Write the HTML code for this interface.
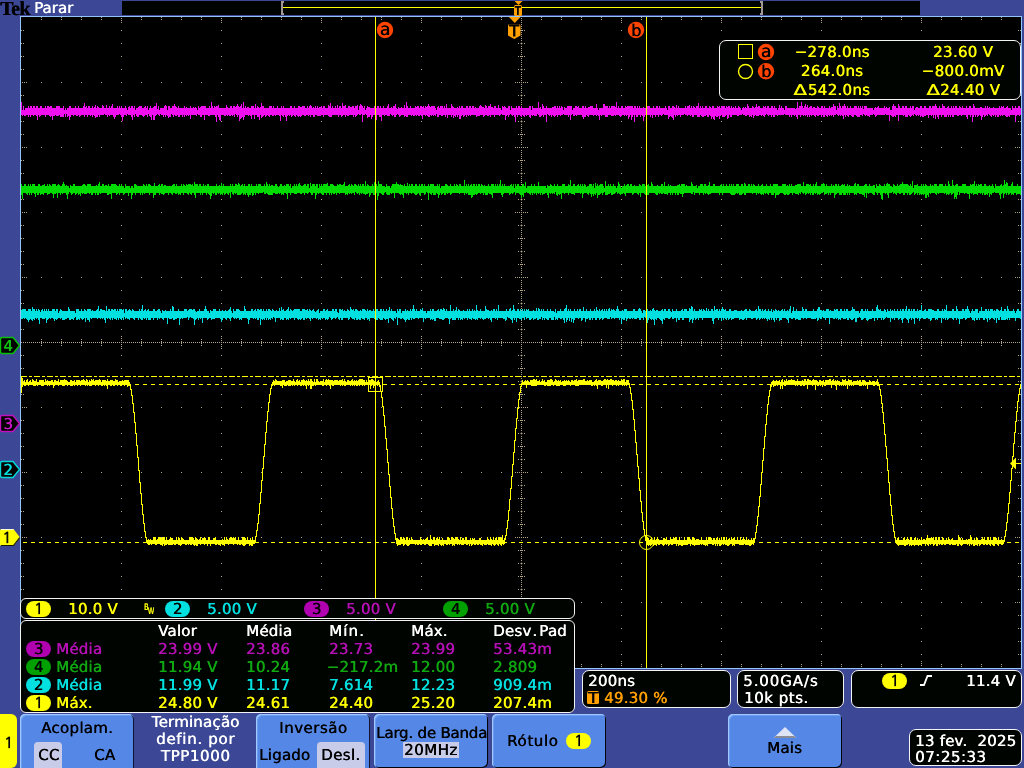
<!DOCTYPE html>
<html lang="pt"><head><meta charset="utf-8"><title>Tek</title>
<style>
html,body{margin:0;padding:0;}
body{text-rendering:geometricPrecision;width:1024px;height:768px;overflow:hidden;background:#3c4896;position:relative;font-family:"DejaVu Sans","Liberation Sans",sans-serif;font-size:15px;line-height:18px;}
#scr{position:absolute;left:0;top:0;}
#ov{position:absolute;left:0;top:0;width:1024px;height:768px;will-change:transform;}
.abs{position:absolute;overflow:visible;}
.t{position:absolute;white-space:nowrap;font-size:15px;line-height:18px;text-shadow:.5px 0 0 currentColor;letter-spacing:.2px;}
.w{color:#fff;} .y{color:#ffff00;} .c{color:#00e0e0;} .m{color:#b410b4;} .g{color:#10a810;} .k{color:#000;}
.ctr{text-align:center;} .cr{text-align:center;letter-spacing:.3px;}
.tek{position:absolute;left:0;top:-2px;font-family:"Liberation Serif","DejaVu Serif",serif;font-weight:bold;font-size:20px;line-height:22px;color:#000;letter-spacing:-.6px;text-shadow:.4px 0 0 #000;}
.ovw{position:absolute;left:122px;top:1px;width:798px;height:14px;background:#000400;}
.box{position:absolute;background:#000400;border:1px solid #f4f4f4;box-sizing:content-box;}
.pill{text-shadow:.6px 0 0 currentColor;position:absolute;width:25px;height:16px;border-radius:8px;color:#000;text-align:center;font-size:15px;line-height:16px;}
.bdg{position:absolute;width:16px;height:16px;text-align:center;line-height:16px;color:#000;text-shadow:.5px 0 0 #000;}
.ba{font-size:17px;}
.bb{font-size:16px;}
.dl{display:inline-block;transform:scaleX(1.3);transform-origin:50% 50%;margin:0 2px 0 1.500px;}
.mk{width:12px;text-align:center;font-size:15px;line-height:18px;}
.tbox{position:absolute;width:12px;height:13px;background:#ffa000;color:#000;font-size:14px;line-height:13px;text-align:center;font-weight:bold;border-radius:1.5px;overflow:hidden;}
.one{font-family:"NanumGothic","DejaVu Sans",sans-serif;font-size:15px;line-height:18px;-webkit-text-stroke:.35px currentColor;}
.ytab{position:absolute;left:0;top:714px;width:17px;height:54px;background:#ffff00;border-radius:0 6px 6px 0;}
.btn{position:absolute;background:#5588e6;border-radius:5px;box-shadow:inset 1px 1px 0 #a0c8ff, inset -1px -1px 0 #04040c, inset 2px 2px 0 #6a9cf0;box-sizing:border-box;}
.flat{border-radius:5px 5px 0 0;box-shadow:inset 1px 1px 0 #a0c8ff, inset -1px 0 0 #101430, inset 2px 2px 0 #6a9cf0;}
.sel{position:absolute;background:#c8cce8;border-radius:4px 4px 0 0;}
</style></head><body>
<svg id="scr" width="1024" height="768" viewBox="0 0 1024 768" shape-rendering="crispEdges">
<rect x="20" y="16" width="1002" height="653" fill="#94c4fa"/>
<rect x="21" y="17" width="1000" height="651" fill="#000"/>
<path fill="#b2a684" d="M41 82h1v1h-1zM61 82h1v1h-1zM81 82h1v1h-1zM101 82h1v1h-1zM121 82h1v1h-1zM141 82h1v1h-1zM161 82h1v1h-1zM181 82h1v1h-1zM201 82h1v1h-1zM221 82h1v1h-1zM241 82h1v1h-1zM261 82h1v1h-1zM281 82h1v1h-1zM301 82h1v1h-1zM321 82h1v1h-1zM341 82h1v1h-1zM361 82h1v1h-1zM381 82h1v1h-1zM401 82h1v1h-1zM421 82h1v1h-1zM441 82h1v1h-1zM461 82h1v1h-1zM481 82h1v1h-1zM501 82h1v1h-1zM541 82h1v1h-1zM561 82h1v1h-1zM581 82h1v1h-1zM601 82h1v1h-1zM621 82h1v1h-1zM641 82h1v1h-1zM661 82h1v1h-1zM681 82h1v1h-1zM701 82h1v1h-1zM721 82h1v1h-1zM741 82h1v1h-1zM761 82h1v1h-1zM781 82h1v1h-1zM801 82h1v1h-1zM821 82h1v1h-1zM841 82h1v1h-1zM861 82h1v1h-1zM881 82h1v1h-1zM901 82h1v1h-1zM921 82h1v1h-1zM941 82h1v1h-1zM961 82h1v1h-1zM981 82h1v1h-1zM1001 82h1v1h-1zM41 147h1v1h-1zM61 147h1v1h-1zM81 147h1v1h-1zM101 147h1v1h-1zM121 147h1v1h-1zM141 147h1v1h-1zM161 147h1v1h-1zM181 147h1v1h-1zM201 147h1v1h-1zM221 147h1v1h-1zM241 147h1v1h-1zM261 147h1v1h-1zM281 147h1v1h-1zM301 147h1v1h-1zM321 147h1v1h-1zM341 147h1v1h-1zM361 147h1v1h-1zM381 147h1v1h-1zM401 147h1v1h-1zM421 147h1v1h-1zM441 147h1v1h-1zM461 147h1v1h-1zM481 147h1v1h-1zM501 147h1v1h-1zM541 147h1v1h-1zM561 147h1v1h-1zM581 147h1v1h-1zM601 147h1v1h-1zM621 147h1v1h-1zM641 147h1v1h-1zM661 147h1v1h-1zM681 147h1v1h-1zM701 147h1v1h-1zM721 147h1v1h-1zM741 147h1v1h-1zM761 147h1v1h-1zM781 147h1v1h-1zM801 147h1v1h-1zM821 147h1v1h-1zM841 147h1v1h-1zM861 147h1v1h-1zM881 147h1v1h-1zM901 147h1v1h-1zM921 147h1v1h-1zM941 147h1v1h-1zM961 147h1v1h-1zM981 147h1v1h-1zM1001 147h1v1h-1zM41 212h1v1h-1zM61 212h1v1h-1zM81 212h1v1h-1zM101 212h1v1h-1zM121 212h1v1h-1zM141 212h1v1h-1zM161 212h1v1h-1zM181 212h1v1h-1zM201 212h1v1h-1zM221 212h1v1h-1zM241 212h1v1h-1zM261 212h1v1h-1zM281 212h1v1h-1zM301 212h1v1h-1zM321 212h1v1h-1zM341 212h1v1h-1zM361 212h1v1h-1zM381 212h1v1h-1zM401 212h1v1h-1zM421 212h1v1h-1zM441 212h1v1h-1zM461 212h1v1h-1zM481 212h1v1h-1zM501 212h1v1h-1zM541 212h1v1h-1zM561 212h1v1h-1zM581 212h1v1h-1zM601 212h1v1h-1zM621 212h1v1h-1zM641 212h1v1h-1zM661 212h1v1h-1zM681 212h1v1h-1zM701 212h1v1h-1zM721 212h1v1h-1zM741 212h1v1h-1zM761 212h1v1h-1zM781 212h1v1h-1zM801 212h1v1h-1zM821 212h1v1h-1zM841 212h1v1h-1zM861 212h1v1h-1zM881 212h1v1h-1zM901 212h1v1h-1zM921 212h1v1h-1zM941 212h1v1h-1zM961 212h1v1h-1zM981 212h1v1h-1zM1001 212h1v1h-1zM41 277h1v1h-1zM61 277h1v1h-1zM81 277h1v1h-1zM101 277h1v1h-1zM121 277h1v1h-1zM141 277h1v1h-1zM161 277h1v1h-1zM181 277h1v1h-1zM201 277h1v1h-1zM221 277h1v1h-1zM241 277h1v1h-1zM261 277h1v1h-1zM281 277h1v1h-1zM301 277h1v1h-1zM321 277h1v1h-1zM341 277h1v1h-1zM361 277h1v1h-1zM381 277h1v1h-1zM401 277h1v1h-1zM421 277h1v1h-1zM441 277h1v1h-1zM461 277h1v1h-1zM481 277h1v1h-1zM501 277h1v1h-1zM541 277h1v1h-1zM561 277h1v1h-1zM581 277h1v1h-1zM601 277h1v1h-1zM621 277h1v1h-1zM641 277h1v1h-1zM661 277h1v1h-1zM681 277h1v1h-1zM701 277h1v1h-1zM721 277h1v1h-1zM741 277h1v1h-1zM761 277h1v1h-1zM781 277h1v1h-1zM801 277h1v1h-1zM821 277h1v1h-1zM841 277h1v1h-1zM861 277h1v1h-1zM881 277h1v1h-1zM901 277h1v1h-1zM921 277h1v1h-1zM941 277h1v1h-1zM961 277h1v1h-1zM981 277h1v1h-1zM1001 277h1v1h-1zM41 407h1v1h-1zM61 407h1v1h-1zM81 407h1v1h-1zM101 407h1v1h-1zM121 407h1v1h-1zM141 407h1v1h-1zM161 407h1v1h-1zM181 407h1v1h-1zM201 407h1v1h-1zM221 407h1v1h-1zM241 407h1v1h-1zM261 407h1v1h-1zM281 407h1v1h-1zM301 407h1v1h-1zM321 407h1v1h-1zM341 407h1v1h-1zM361 407h1v1h-1zM381 407h1v1h-1zM401 407h1v1h-1zM421 407h1v1h-1zM441 407h1v1h-1zM461 407h1v1h-1zM481 407h1v1h-1zM501 407h1v1h-1zM541 407h1v1h-1zM561 407h1v1h-1zM581 407h1v1h-1zM601 407h1v1h-1zM621 407h1v1h-1zM641 407h1v1h-1zM661 407h1v1h-1zM681 407h1v1h-1zM701 407h1v1h-1zM721 407h1v1h-1zM741 407h1v1h-1zM761 407h1v1h-1zM781 407h1v1h-1zM801 407h1v1h-1zM821 407h1v1h-1zM841 407h1v1h-1zM861 407h1v1h-1zM881 407h1v1h-1zM901 407h1v1h-1zM921 407h1v1h-1zM941 407h1v1h-1zM961 407h1v1h-1zM981 407h1v1h-1zM1001 407h1v1h-1zM41 472h1v1h-1zM61 472h1v1h-1zM81 472h1v1h-1zM101 472h1v1h-1zM121 472h1v1h-1zM141 472h1v1h-1zM161 472h1v1h-1zM181 472h1v1h-1zM201 472h1v1h-1zM221 472h1v1h-1zM241 472h1v1h-1zM261 472h1v1h-1zM281 472h1v1h-1zM301 472h1v1h-1zM321 472h1v1h-1zM341 472h1v1h-1zM361 472h1v1h-1zM381 472h1v1h-1zM401 472h1v1h-1zM421 472h1v1h-1zM441 472h1v1h-1zM461 472h1v1h-1zM481 472h1v1h-1zM501 472h1v1h-1zM541 472h1v1h-1zM561 472h1v1h-1zM581 472h1v1h-1zM601 472h1v1h-1zM621 472h1v1h-1zM641 472h1v1h-1zM661 472h1v1h-1zM681 472h1v1h-1zM701 472h1v1h-1zM721 472h1v1h-1zM741 472h1v1h-1zM761 472h1v1h-1zM781 472h1v1h-1zM801 472h1v1h-1zM821 472h1v1h-1zM841 472h1v1h-1zM861 472h1v1h-1zM881 472h1v1h-1zM901 472h1v1h-1zM921 472h1v1h-1zM941 472h1v1h-1zM961 472h1v1h-1zM981 472h1v1h-1zM1001 472h1v1h-1zM41 537h1v1h-1zM61 537h1v1h-1zM81 537h1v1h-1zM101 537h1v1h-1zM121 537h1v1h-1zM141 537h1v1h-1zM161 537h1v1h-1zM181 537h1v1h-1zM201 537h1v1h-1zM221 537h1v1h-1zM241 537h1v1h-1zM261 537h1v1h-1zM281 537h1v1h-1zM301 537h1v1h-1zM321 537h1v1h-1zM341 537h1v1h-1zM361 537h1v1h-1zM381 537h1v1h-1zM401 537h1v1h-1zM421 537h1v1h-1zM441 537h1v1h-1zM461 537h1v1h-1zM481 537h1v1h-1zM501 537h1v1h-1zM541 537h1v1h-1zM561 537h1v1h-1zM581 537h1v1h-1zM601 537h1v1h-1zM621 537h1v1h-1zM641 537h1v1h-1zM661 537h1v1h-1zM681 537h1v1h-1zM701 537h1v1h-1zM721 537h1v1h-1zM741 537h1v1h-1zM761 537h1v1h-1zM781 537h1v1h-1zM801 537h1v1h-1zM821 537h1v1h-1zM841 537h1v1h-1zM861 537h1v1h-1zM881 537h1v1h-1zM901 537h1v1h-1zM921 537h1v1h-1zM941 537h1v1h-1zM961 537h1v1h-1zM981 537h1v1h-1zM1001 537h1v1h-1zM41 602h1v1h-1zM61 602h1v1h-1zM81 602h1v1h-1zM101 602h1v1h-1zM121 602h1v1h-1zM141 602h1v1h-1zM161 602h1v1h-1zM181 602h1v1h-1zM201 602h1v1h-1zM221 602h1v1h-1zM241 602h1v1h-1zM261 602h1v1h-1zM281 602h1v1h-1zM301 602h1v1h-1zM321 602h1v1h-1zM341 602h1v1h-1zM361 602h1v1h-1zM381 602h1v1h-1zM401 602h1v1h-1zM421 602h1v1h-1zM441 602h1v1h-1zM461 602h1v1h-1zM481 602h1v1h-1zM501 602h1v1h-1zM541 602h1v1h-1zM561 602h1v1h-1zM581 602h1v1h-1zM601 602h1v1h-1zM621 602h1v1h-1zM641 602h1v1h-1zM661 602h1v1h-1zM681 602h1v1h-1zM701 602h1v1h-1zM721 602h1v1h-1zM741 602h1v1h-1zM761 602h1v1h-1zM781 602h1v1h-1zM801 602h1v1h-1zM821 602h1v1h-1zM841 602h1v1h-1zM861 602h1v1h-1zM881 602h1v1h-1zM901 602h1v1h-1zM921 602h1v1h-1zM941 602h1v1h-1zM961 602h1v1h-1zM981 602h1v1h-1zM1001 602h1v1h-1zM121 30h1v1h-1zM121 43h1v1h-1zM121 56h1v1h-1zM121 69h1v1h-1zM121 82h1v1h-1zM121 95h1v1h-1zM121 108h1v1h-1zM121 121h1v1h-1zM121 134h1v1h-1zM121 147h1v1h-1zM121 160h1v1h-1zM121 173h1v1h-1zM121 186h1v1h-1zM121 199h1v1h-1zM121 212h1v1h-1zM121 225h1v1h-1zM121 238h1v1h-1zM121 251h1v1h-1zM121 264h1v1h-1zM121 277h1v1h-1zM121 290h1v1h-1zM121 303h1v1h-1zM121 316h1v1h-1zM121 329h1v1h-1zM121 355h1v1h-1zM121 368h1v1h-1zM121 381h1v1h-1zM121 394h1v1h-1zM121 407h1v1h-1zM121 420h1v1h-1zM121 433h1v1h-1zM121 446h1v1h-1zM121 459h1v1h-1zM121 472h1v1h-1zM121 485h1v1h-1zM121 498h1v1h-1zM121 511h1v1h-1zM121 524h1v1h-1zM121 537h1v1h-1zM121 550h1v1h-1zM121 563h1v1h-1zM121 576h1v1h-1zM121 589h1v1h-1zM121 602h1v1h-1zM121 615h1v1h-1zM121 628h1v1h-1zM121 641h1v1h-1zM121 654h1v1h-1zM221 30h1v1h-1zM221 43h1v1h-1zM221 56h1v1h-1zM221 69h1v1h-1zM221 82h1v1h-1zM221 95h1v1h-1zM221 108h1v1h-1zM221 121h1v1h-1zM221 134h1v1h-1zM221 147h1v1h-1zM221 160h1v1h-1zM221 173h1v1h-1zM221 186h1v1h-1zM221 199h1v1h-1zM221 212h1v1h-1zM221 225h1v1h-1zM221 238h1v1h-1zM221 251h1v1h-1zM221 264h1v1h-1zM221 277h1v1h-1zM221 290h1v1h-1zM221 303h1v1h-1zM221 316h1v1h-1zM221 329h1v1h-1zM221 355h1v1h-1zM221 368h1v1h-1zM221 381h1v1h-1zM221 394h1v1h-1zM221 407h1v1h-1zM221 420h1v1h-1zM221 433h1v1h-1zM221 446h1v1h-1zM221 459h1v1h-1zM221 472h1v1h-1zM221 485h1v1h-1zM221 498h1v1h-1zM221 511h1v1h-1zM221 524h1v1h-1zM221 537h1v1h-1zM221 550h1v1h-1zM221 563h1v1h-1zM221 576h1v1h-1zM221 589h1v1h-1zM221 602h1v1h-1zM221 615h1v1h-1zM221 628h1v1h-1zM221 641h1v1h-1zM221 654h1v1h-1zM321 30h1v1h-1zM321 43h1v1h-1zM321 56h1v1h-1zM321 69h1v1h-1zM321 82h1v1h-1zM321 95h1v1h-1zM321 108h1v1h-1zM321 121h1v1h-1zM321 134h1v1h-1zM321 147h1v1h-1zM321 160h1v1h-1zM321 173h1v1h-1zM321 186h1v1h-1zM321 199h1v1h-1zM321 212h1v1h-1zM321 225h1v1h-1zM321 238h1v1h-1zM321 251h1v1h-1zM321 264h1v1h-1zM321 277h1v1h-1zM321 290h1v1h-1zM321 303h1v1h-1zM321 316h1v1h-1zM321 329h1v1h-1zM321 355h1v1h-1zM321 368h1v1h-1zM321 381h1v1h-1zM321 394h1v1h-1zM321 407h1v1h-1zM321 420h1v1h-1zM321 433h1v1h-1zM321 446h1v1h-1zM321 459h1v1h-1zM321 472h1v1h-1zM321 485h1v1h-1zM321 498h1v1h-1zM321 511h1v1h-1zM321 524h1v1h-1zM321 537h1v1h-1zM321 550h1v1h-1zM321 563h1v1h-1zM321 576h1v1h-1zM321 589h1v1h-1zM321 602h1v1h-1zM321 615h1v1h-1zM321 628h1v1h-1zM321 641h1v1h-1zM321 654h1v1h-1zM421 30h1v1h-1zM421 43h1v1h-1zM421 56h1v1h-1zM421 69h1v1h-1zM421 82h1v1h-1zM421 95h1v1h-1zM421 108h1v1h-1zM421 121h1v1h-1zM421 134h1v1h-1zM421 147h1v1h-1zM421 160h1v1h-1zM421 173h1v1h-1zM421 186h1v1h-1zM421 199h1v1h-1zM421 212h1v1h-1zM421 225h1v1h-1zM421 238h1v1h-1zM421 251h1v1h-1zM421 264h1v1h-1zM421 277h1v1h-1zM421 290h1v1h-1zM421 303h1v1h-1zM421 316h1v1h-1zM421 329h1v1h-1zM421 355h1v1h-1zM421 368h1v1h-1zM421 381h1v1h-1zM421 394h1v1h-1zM421 407h1v1h-1zM421 420h1v1h-1zM421 433h1v1h-1zM421 446h1v1h-1zM421 459h1v1h-1zM421 472h1v1h-1zM421 485h1v1h-1zM421 498h1v1h-1zM421 511h1v1h-1zM421 524h1v1h-1zM421 537h1v1h-1zM421 550h1v1h-1zM421 563h1v1h-1zM421 576h1v1h-1zM421 589h1v1h-1zM421 602h1v1h-1zM421 615h1v1h-1zM421 628h1v1h-1zM421 641h1v1h-1zM421 654h1v1h-1zM621 30h1v1h-1zM621 43h1v1h-1zM621 56h1v1h-1zM621 69h1v1h-1zM621 82h1v1h-1zM621 95h1v1h-1zM621 108h1v1h-1zM621 121h1v1h-1zM621 134h1v1h-1zM621 147h1v1h-1zM621 160h1v1h-1zM621 173h1v1h-1zM621 186h1v1h-1zM621 199h1v1h-1zM621 212h1v1h-1zM621 225h1v1h-1zM621 238h1v1h-1zM621 251h1v1h-1zM621 264h1v1h-1zM621 277h1v1h-1zM621 290h1v1h-1zM621 303h1v1h-1zM621 316h1v1h-1zM621 329h1v1h-1zM621 355h1v1h-1zM621 368h1v1h-1zM621 381h1v1h-1zM621 394h1v1h-1zM621 407h1v1h-1zM621 420h1v1h-1zM621 433h1v1h-1zM621 446h1v1h-1zM621 459h1v1h-1zM621 472h1v1h-1zM621 485h1v1h-1zM621 498h1v1h-1zM621 511h1v1h-1zM621 524h1v1h-1zM621 537h1v1h-1zM621 550h1v1h-1zM621 563h1v1h-1zM621 576h1v1h-1zM621 589h1v1h-1zM621 602h1v1h-1zM621 615h1v1h-1zM621 628h1v1h-1zM621 641h1v1h-1zM621 654h1v1h-1zM721 30h1v1h-1zM721 43h1v1h-1zM721 56h1v1h-1zM721 69h1v1h-1zM721 82h1v1h-1zM721 95h1v1h-1zM721 108h1v1h-1zM721 121h1v1h-1zM721 134h1v1h-1zM721 147h1v1h-1zM721 160h1v1h-1zM721 173h1v1h-1zM721 186h1v1h-1zM721 199h1v1h-1zM721 212h1v1h-1zM721 225h1v1h-1zM721 238h1v1h-1zM721 251h1v1h-1zM721 264h1v1h-1zM721 277h1v1h-1zM721 290h1v1h-1zM721 303h1v1h-1zM721 316h1v1h-1zM721 329h1v1h-1zM721 355h1v1h-1zM721 368h1v1h-1zM721 381h1v1h-1zM721 394h1v1h-1zM721 407h1v1h-1zM721 420h1v1h-1zM721 433h1v1h-1zM721 446h1v1h-1zM721 459h1v1h-1zM721 472h1v1h-1zM721 485h1v1h-1zM721 498h1v1h-1zM721 511h1v1h-1zM721 524h1v1h-1zM721 537h1v1h-1zM721 550h1v1h-1zM721 563h1v1h-1zM721 576h1v1h-1zM721 589h1v1h-1zM721 602h1v1h-1zM721 615h1v1h-1zM721 628h1v1h-1zM721 641h1v1h-1zM721 654h1v1h-1zM821 30h1v1h-1zM821 43h1v1h-1zM821 56h1v1h-1zM821 69h1v1h-1zM821 82h1v1h-1zM821 95h1v1h-1zM821 108h1v1h-1zM821 121h1v1h-1zM821 134h1v1h-1zM821 147h1v1h-1zM821 160h1v1h-1zM821 173h1v1h-1zM821 186h1v1h-1zM821 199h1v1h-1zM821 212h1v1h-1zM821 225h1v1h-1zM821 238h1v1h-1zM821 251h1v1h-1zM821 264h1v1h-1zM821 277h1v1h-1zM821 290h1v1h-1zM821 303h1v1h-1zM821 316h1v1h-1zM821 329h1v1h-1zM821 355h1v1h-1zM821 368h1v1h-1zM821 381h1v1h-1zM821 394h1v1h-1zM821 407h1v1h-1zM821 420h1v1h-1zM821 433h1v1h-1zM821 446h1v1h-1zM821 459h1v1h-1zM821 472h1v1h-1zM821 485h1v1h-1zM821 498h1v1h-1zM821 511h1v1h-1zM821 524h1v1h-1zM821 537h1v1h-1zM821 550h1v1h-1zM821 563h1v1h-1zM821 576h1v1h-1zM821 589h1v1h-1zM821 602h1v1h-1zM821 615h1v1h-1zM821 628h1v1h-1zM821 641h1v1h-1zM821 654h1v1h-1zM921 30h1v1h-1zM921 43h1v1h-1zM921 56h1v1h-1zM921 69h1v1h-1zM921 82h1v1h-1zM921 95h1v1h-1zM921 108h1v1h-1zM921 121h1v1h-1zM921 134h1v1h-1zM921 147h1v1h-1zM921 160h1v1h-1zM921 173h1v1h-1zM921 186h1v1h-1zM921 199h1v1h-1zM921 212h1v1h-1zM921 225h1v1h-1zM921 238h1v1h-1zM921 251h1v1h-1zM921 264h1v1h-1zM921 277h1v1h-1zM921 290h1v1h-1zM921 303h1v1h-1zM921 316h1v1h-1zM921 329h1v1h-1zM921 355h1v1h-1zM921 368h1v1h-1zM921 381h1v1h-1zM921 394h1v1h-1zM921 407h1v1h-1zM921 420h1v1h-1zM921 433h1v1h-1zM921 446h1v1h-1zM921 459h1v1h-1zM921 472h1v1h-1zM921 485h1v1h-1zM921 498h1v1h-1zM921 511h1v1h-1zM921 524h1v1h-1zM921 537h1v1h-1zM921 550h1v1h-1zM921 563h1v1h-1zM921 576h1v1h-1zM921 589h1v1h-1zM921 602h1v1h-1zM921 615h1v1h-1zM921 628h1v1h-1zM921 641h1v1h-1zM921 654h1v1h-1zM21 30h1v1h-1zM1020 30h1v1h-1zM23 30h1v1h-1zM1018 30h1v1h-1zM21 43h1v1h-1zM1020 43h1v1h-1zM23 43h1v1h-1zM1018 43h1v1h-1zM21 56h1v1h-1zM1020 56h1v1h-1zM23 56h1v1h-1zM1018 56h1v1h-1zM21 69h1v1h-1zM1020 69h1v1h-1zM23 69h1v1h-1zM1018 69h1v1h-1zM22 82h1v1h-1zM1019 82h1v1h-1zM24 82h1v1h-1zM1017 82h1v1h-1zM26 82h1v1h-1zM1015 82h1v1h-1zM21 95h1v1h-1zM1020 95h1v1h-1zM23 95h1v1h-1zM1018 95h1v1h-1zM21 108h1v1h-1zM1020 108h1v1h-1zM23 108h1v1h-1zM1018 108h1v1h-1zM21 121h1v1h-1zM1020 121h1v1h-1zM23 121h1v1h-1zM1018 121h1v1h-1zM21 134h1v1h-1zM1020 134h1v1h-1zM23 134h1v1h-1zM1018 134h1v1h-1zM22 147h1v1h-1zM1019 147h1v1h-1zM24 147h1v1h-1zM1017 147h1v1h-1zM26 147h1v1h-1zM1015 147h1v1h-1zM21 160h1v1h-1zM1020 160h1v1h-1zM23 160h1v1h-1zM1018 160h1v1h-1zM21 173h1v1h-1zM1020 173h1v1h-1zM23 173h1v1h-1zM1018 173h1v1h-1zM21 186h1v1h-1zM1020 186h1v1h-1zM23 186h1v1h-1zM1018 186h1v1h-1zM21 199h1v1h-1zM1020 199h1v1h-1zM23 199h1v1h-1zM1018 199h1v1h-1zM22 212h1v1h-1zM1019 212h1v1h-1zM24 212h1v1h-1zM1017 212h1v1h-1zM26 212h1v1h-1zM1015 212h1v1h-1zM21 225h1v1h-1zM1020 225h1v1h-1zM23 225h1v1h-1zM1018 225h1v1h-1zM21 238h1v1h-1zM1020 238h1v1h-1zM23 238h1v1h-1zM1018 238h1v1h-1zM21 251h1v1h-1zM1020 251h1v1h-1zM23 251h1v1h-1zM1018 251h1v1h-1zM21 264h1v1h-1zM1020 264h1v1h-1zM23 264h1v1h-1zM1018 264h1v1h-1zM22 277h1v1h-1zM1019 277h1v1h-1zM24 277h1v1h-1zM1017 277h1v1h-1zM26 277h1v1h-1zM1015 277h1v1h-1zM21 290h1v1h-1zM1020 290h1v1h-1zM23 290h1v1h-1zM1018 290h1v1h-1zM21 303h1v1h-1zM1020 303h1v1h-1zM23 303h1v1h-1zM1018 303h1v1h-1zM21 316h1v1h-1zM1020 316h1v1h-1zM23 316h1v1h-1zM1018 316h1v1h-1zM21 329h1v1h-1zM1020 329h1v1h-1zM23 329h1v1h-1zM1018 329h1v1h-1zM21 355h1v1h-1zM1020 355h1v1h-1zM23 355h1v1h-1zM1018 355h1v1h-1zM21 368h1v1h-1zM1020 368h1v1h-1zM23 368h1v1h-1zM1018 368h1v1h-1zM21 381h1v1h-1zM1020 381h1v1h-1zM23 381h1v1h-1zM1018 381h1v1h-1zM21 394h1v1h-1zM1020 394h1v1h-1zM23 394h1v1h-1zM1018 394h1v1h-1zM22 407h1v1h-1zM1019 407h1v1h-1zM24 407h1v1h-1zM1017 407h1v1h-1zM26 407h1v1h-1zM1015 407h1v1h-1zM21 420h1v1h-1zM1020 420h1v1h-1zM23 420h1v1h-1zM1018 420h1v1h-1zM21 433h1v1h-1zM1020 433h1v1h-1zM23 433h1v1h-1zM1018 433h1v1h-1zM21 446h1v1h-1zM1020 446h1v1h-1zM23 446h1v1h-1zM1018 446h1v1h-1zM21 459h1v1h-1zM1020 459h1v1h-1zM23 459h1v1h-1zM1018 459h1v1h-1zM22 472h1v1h-1zM1019 472h1v1h-1zM24 472h1v1h-1zM1017 472h1v1h-1zM26 472h1v1h-1zM1015 472h1v1h-1zM21 485h1v1h-1zM1020 485h1v1h-1zM23 485h1v1h-1zM1018 485h1v1h-1zM21 498h1v1h-1zM1020 498h1v1h-1zM23 498h1v1h-1zM1018 498h1v1h-1zM21 511h1v1h-1zM1020 511h1v1h-1zM23 511h1v1h-1zM1018 511h1v1h-1zM21 524h1v1h-1zM1020 524h1v1h-1zM23 524h1v1h-1zM1018 524h1v1h-1zM22 537h1v1h-1zM1019 537h1v1h-1zM24 537h1v1h-1zM1017 537h1v1h-1zM26 537h1v1h-1zM1015 537h1v1h-1zM21 550h1v1h-1zM1020 550h1v1h-1zM23 550h1v1h-1zM1018 550h1v1h-1zM21 563h1v1h-1zM1020 563h1v1h-1zM23 563h1v1h-1zM1018 563h1v1h-1zM21 576h1v1h-1zM1020 576h1v1h-1zM23 576h1v1h-1zM1018 576h1v1h-1zM21 589h1v1h-1zM1020 589h1v1h-1zM23 589h1v1h-1zM1018 589h1v1h-1zM22 602h1v1h-1zM1019 602h1v1h-1zM24 602h1v1h-1zM1017 602h1v1h-1zM26 602h1v1h-1zM1015 602h1v1h-1zM21 615h1v1h-1zM1020 615h1v1h-1zM23 615h1v1h-1zM1018 615h1v1h-1zM21 628h1v1h-1zM1020 628h1v1h-1zM23 628h1v1h-1zM1018 628h1v1h-1zM21 641h1v1h-1zM1020 641h1v1h-1zM23 641h1v1h-1zM1018 641h1v1h-1zM21 654h1v1h-1zM1020 654h1v1h-1zM23 654h1v1h-1zM1018 654h1v1h-1zM41 17h1v1h-1zM41 666h1v1h-1zM41 19h1v1h-1zM41 664h1v1h-1zM61 17h1v1h-1zM61 666h1v1h-1zM61 19h1v1h-1zM61 664h1v1h-1zM81 17h1v1h-1zM81 666h1v1h-1zM81 19h1v1h-1zM81 664h1v1h-1zM101 17h1v1h-1zM101 666h1v1h-1zM101 19h1v1h-1zM101 664h1v1h-1zM121 18h1v1h-1zM121 665h1v1h-1zM121 20h1v1h-1zM121 663h1v1h-1zM121 22h1v1h-1zM121 661h1v1h-1zM141 17h1v1h-1zM141 666h1v1h-1zM141 19h1v1h-1zM141 664h1v1h-1zM161 17h1v1h-1zM161 666h1v1h-1zM161 19h1v1h-1zM161 664h1v1h-1zM181 17h1v1h-1zM181 666h1v1h-1zM181 19h1v1h-1zM181 664h1v1h-1zM201 17h1v1h-1zM201 666h1v1h-1zM201 19h1v1h-1zM201 664h1v1h-1zM221 18h1v1h-1zM221 665h1v1h-1zM221 20h1v1h-1zM221 663h1v1h-1zM221 22h1v1h-1zM221 661h1v1h-1zM241 17h1v1h-1zM241 666h1v1h-1zM241 19h1v1h-1zM241 664h1v1h-1zM261 17h1v1h-1zM261 666h1v1h-1zM261 19h1v1h-1zM261 664h1v1h-1zM281 17h1v1h-1zM281 666h1v1h-1zM281 19h1v1h-1zM281 664h1v1h-1zM301 17h1v1h-1zM301 666h1v1h-1zM301 19h1v1h-1zM301 664h1v1h-1zM321 18h1v1h-1zM321 665h1v1h-1zM321 20h1v1h-1zM321 663h1v1h-1zM321 22h1v1h-1zM321 661h1v1h-1zM341 17h1v1h-1zM341 666h1v1h-1zM341 19h1v1h-1zM341 664h1v1h-1zM361 17h1v1h-1zM361 666h1v1h-1zM361 19h1v1h-1zM361 664h1v1h-1zM381 17h1v1h-1zM381 666h1v1h-1zM381 19h1v1h-1zM381 664h1v1h-1zM401 17h1v1h-1zM401 666h1v1h-1zM401 19h1v1h-1zM401 664h1v1h-1zM421 18h1v1h-1zM421 665h1v1h-1zM421 20h1v1h-1zM421 663h1v1h-1zM421 22h1v1h-1zM421 661h1v1h-1zM441 17h1v1h-1zM441 666h1v1h-1zM441 19h1v1h-1zM441 664h1v1h-1zM461 17h1v1h-1zM461 666h1v1h-1zM461 19h1v1h-1zM461 664h1v1h-1zM481 17h1v1h-1zM481 666h1v1h-1zM481 19h1v1h-1zM481 664h1v1h-1zM501 17h1v1h-1zM501 666h1v1h-1zM501 19h1v1h-1zM501 664h1v1h-1zM541 17h1v1h-1zM541 666h1v1h-1zM541 19h1v1h-1zM541 664h1v1h-1zM561 17h1v1h-1zM561 666h1v1h-1zM561 19h1v1h-1zM561 664h1v1h-1zM581 17h1v1h-1zM581 666h1v1h-1zM581 19h1v1h-1zM581 664h1v1h-1zM601 17h1v1h-1zM601 666h1v1h-1zM601 19h1v1h-1zM601 664h1v1h-1zM621 18h1v1h-1zM621 665h1v1h-1zM621 20h1v1h-1zM621 663h1v1h-1zM621 22h1v1h-1zM621 661h1v1h-1zM641 17h1v1h-1zM641 666h1v1h-1zM641 19h1v1h-1zM641 664h1v1h-1zM661 17h1v1h-1zM661 666h1v1h-1zM661 19h1v1h-1zM661 664h1v1h-1zM681 17h1v1h-1zM681 666h1v1h-1zM681 19h1v1h-1zM681 664h1v1h-1zM701 17h1v1h-1zM701 666h1v1h-1zM701 19h1v1h-1zM701 664h1v1h-1zM721 18h1v1h-1zM721 665h1v1h-1zM721 20h1v1h-1zM721 663h1v1h-1zM721 22h1v1h-1zM721 661h1v1h-1zM741 17h1v1h-1zM741 666h1v1h-1zM741 19h1v1h-1zM741 664h1v1h-1zM761 17h1v1h-1zM761 666h1v1h-1zM761 19h1v1h-1zM761 664h1v1h-1zM781 17h1v1h-1zM781 666h1v1h-1zM781 19h1v1h-1zM781 664h1v1h-1zM801 17h1v1h-1zM801 666h1v1h-1zM801 19h1v1h-1zM801 664h1v1h-1zM821 18h1v1h-1zM821 665h1v1h-1zM821 20h1v1h-1zM821 663h1v1h-1zM821 22h1v1h-1zM821 661h1v1h-1zM841 17h1v1h-1zM841 666h1v1h-1zM841 19h1v1h-1zM841 664h1v1h-1zM861 17h1v1h-1zM861 666h1v1h-1zM861 19h1v1h-1zM861 664h1v1h-1zM881 17h1v1h-1zM881 666h1v1h-1zM881 19h1v1h-1zM881 664h1v1h-1zM901 17h1v1h-1zM901 666h1v1h-1zM901 19h1v1h-1zM901 664h1v1h-1zM921 18h1v1h-1zM921 665h1v1h-1zM921 20h1v1h-1zM921 663h1v1h-1zM921 22h1v1h-1zM921 661h1v1h-1zM941 17h1v1h-1zM941 666h1v1h-1zM941 19h1v1h-1zM941 664h1v1h-1zM961 17h1v1h-1zM961 666h1v1h-1zM961 19h1v1h-1zM961 664h1v1h-1zM981 17h1v1h-1zM981 666h1v1h-1zM981 19h1v1h-1zM981 664h1v1h-1zM1001 17h1v1h-1zM1001 666h1v1h-1zM1001 19h1v1h-1zM1001 664h1v1h-1zM21 342h1v1h-1zM23 342h1v1h-1zM25 342h1v1h-1zM27 342h1v1h-1zM29 342h1v1h-1zM31 342h1v1h-1zM33 342h1v1h-1zM35 342h1v1h-1zM37 342h1v1h-1zM39 342h1v1h-1zM41 342h1v1h-1zM43 342h1v1h-1zM45 342h1v1h-1zM47 342h1v1h-1zM49 342h1v1h-1zM51 342h1v1h-1zM53 342h1v1h-1zM55 342h1v1h-1zM57 342h1v1h-1zM59 342h1v1h-1zM61 342h1v1h-1zM63 342h1v1h-1zM65 342h1v1h-1zM67 342h1v1h-1zM69 342h1v1h-1zM71 342h1v1h-1zM73 342h1v1h-1zM75 342h1v1h-1zM77 342h1v1h-1zM79 342h1v1h-1zM81 342h1v1h-1zM83 342h1v1h-1zM85 342h1v1h-1zM87 342h1v1h-1zM89 342h1v1h-1zM91 342h1v1h-1zM93 342h1v1h-1zM95 342h1v1h-1zM97 342h1v1h-1zM99 342h1v1h-1zM101 342h1v1h-1zM103 342h1v1h-1zM105 342h1v1h-1zM107 342h1v1h-1zM109 342h1v1h-1zM111 342h1v1h-1zM113 342h1v1h-1zM115 342h1v1h-1zM117 342h1v1h-1zM119 342h1v1h-1zM121 342h1v1h-1zM123 342h1v1h-1zM125 342h1v1h-1zM127 342h1v1h-1zM129 342h1v1h-1zM131 342h1v1h-1zM133 342h1v1h-1zM135 342h1v1h-1zM137 342h1v1h-1zM139 342h1v1h-1zM141 342h1v1h-1zM143 342h1v1h-1zM145 342h1v1h-1zM147 342h1v1h-1zM149 342h1v1h-1zM151 342h1v1h-1zM153 342h1v1h-1zM155 342h1v1h-1zM157 342h1v1h-1zM159 342h1v1h-1zM161 342h1v1h-1zM163 342h1v1h-1zM165 342h1v1h-1zM167 342h1v1h-1zM169 342h1v1h-1zM171 342h1v1h-1zM173 342h1v1h-1zM175 342h1v1h-1zM177 342h1v1h-1zM179 342h1v1h-1zM181 342h1v1h-1zM183 342h1v1h-1zM185 342h1v1h-1zM187 342h1v1h-1zM189 342h1v1h-1zM191 342h1v1h-1zM193 342h1v1h-1zM195 342h1v1h-1zM197 342h1v1h-1zM199 342h1v1h-1zM201 342h1v1h-1zM203 342h1v1h-1zM205 342h1v1h-1zM207 342h1v1h-1zM209 342h1v1h-1zM211 342h1v1h-1zM213 342h1v1h-1zM215 342h1v1h-1zM217 342h1v1h-1zM219 342h1v1h-1zM221 342h1v1h-1zM223 342h1v1h-1zM225 342h1v1h-1zM227 342h1v1h-1zM229 342h1v1h-1zM231 342h1v1h-1zM233 342h1v1h-1zM235 342h1v1h-1zM237 342h1v1h-1zM239 342h1v1h-1zM241 342h1v1h-1zM243 342h1v1h-1zM245 342h1v1h-1zM247 342h1v1h-1zM249 342h1v1h-1zM251 342h1v1h-1zM253 342h1v1h-1zM255 342h1v1h-1zM257 342h1v1h-1zM259 342h1v1h-1zM261 342h1v1h-1zM263 342h1v1h-1zM265 342h1v1h-1zM267 342h1v1h-1zM269 342h1v1h-1zM271 342h1v1h-1zM273 342h1v1h-1zM275 342h1v1h-1zM277 342h1v1h-1zM279 342h1v1h-1zM281 342h1v1h-1zM283 342h1v1h-1zM285 342h1v1h-1zM287 342h1v1h-1zM289 342h1v1h-1zM291 342h1v1h-1zM293 342h1v1h-1zM295 342h1v1h-1zM297 342h1v1h-1zM299 342h1v1h-1zM301 342h1v1h-1zM303 342h1v1h-1zM305 342h1v1h-1zM307 342h1v1h-1zM309 342h1v1h-1zM311 342h1v1h-1zM313 342h1v1h-1zM315 342h1v1h-1zM317 342h1v1h-1zM319 342h1v1h-1zM321 342h1v1h-1zM323 342h1v1h-1zM325 342h1v1h-1zM327 342h1v1h-1zM329 342h1v1h-1zM331 342h1v1h-1zM333 342h1v1h-1zM335 342h1v1h-1zM337 342h1v1h-1zM339 342h1v1h-1zM341 342h1v1h-1zM343 342h1v1h-1zM345 342h1v1h-1zM347 342h1v1h-1zM349 342h1v1h-1zM351 342h1v1h-1zM353 342h1v1h-1zM355 342h1v1h-1zM357 342h1v1h-1zM359 342h1v1h-1zM361 342h1v1h-1zM363 342h1v1h-1zM365 342h1v1h-1zM367 342h1v1h-1zM369 342h1v1h-1zM371 342h1v1h-1zM373 342h1v1h-1zM375 342h1v1h-1zM377 342h1v1h-1zM379 342h1v1h-1zM381 342h1v1h-1zM383 342h1v1h-1zM385 342h1v1h-1zM387 342h1v1h-1zM389 342h1v1h-1zM391 342h1v1h-1zM393 342h1v1h-1zM395 342h1v1h-1zM397 342h1v1h-1zM399 342h1v1h-1zM401 342h1v1h-1zM403 342h1v1h-1zM405 342h1v1h-1zM407 342h1v1h-1zM409 342h1v1h-1zM411 342h1v1h-1zM413 342h1v1h-1zM415 342h1v1h-1zM417 342h1v1h-1zM419 342h1v1h-1zM421 342h1v1h-1zM423 342h1v1h-1zM425 342h1v1h-1zM427 342h1v1h-1zM429 342h1v1h-1zM431 342h1v1h-1zM433 342h1v1h-1zM435 342h1v1h-1zM437 342h1v1h-1zM439 342h1v1h-1zM441 342h1v1h-1zM443 342h1v1h-1zM445 342h1v1h-1zM447 342h1v1h-1zM449 342h1v1h-1zM451 342h1v1h-1zM453 342h1v1h-1zM455 342h1v1h-1zM457 342h1v1h-1zM459 342h1v1h-1zM461 342h1v1h-1zM463 342h1v1h-1zM465 342h1v1h-1zM467 342h1v1h-1zM469 342h1v1h-1zM471 342h1v1h-1zM473 342h1v1h-1zM475 342h1v1h-1zM477 342h1v1h-1zM479 342h1v1h-1zM481 342h1v1h-1zM483 342h1v1h-1zM485 342h1v1h-1zM487 342h1v1h-1zM489 342h1v1h-1zM491 342h1v1h-1zM493 342h1v1h-1zM495 342h1v1h-1zM497 342h1v1h-1zM499 342h1v1h-1zM501 342h1v1h-1zM503 342h1v1h-1zM505 342h1v1h-1zM507 342h1v1h-1zM509 342h1v1h-1zM511 342h1v1h-1zM513 342h1v1h-1zM515 342h1v1h-1zM517 342h1v1h-1zM519 342h1v1h-1zM521 342h1v1h-1zM523 342h1v1h-1zM525 342h1v1h-1zM527 342h1v1h-1zM529 342h1v1h-1zM531 342h1v1h-1zM533 342h1v1h-1zM535 342h1v1h-1zM537 342h1v1h-1zM539 342h1v1h-1zM541 342h1v1h-1zM543 342h1v1h-1zM545 342h1v1h-1zM547 342h1v1h-1zM549 342h1v1h-1zM551 342h1v1h-1zM553 342h1v1h-1zM555 342h1v1h-1zM557 342h1v1h-1zM559 342h1v1h-1zM561 342h1v1h-1zM563 342h1v1h-1zM565 342h1v1h-1zM567 342h1v1h-1zM569 342h1v1h-1zM571 342h1v1h-1zM573 342h1v1h-1zM575 342h1v1h-1zM577 342h1v1h-1zM579 342h1v1h-1zM581 342h1v1h-1zM583 342h1v1h-1zM585 342h1v1h-1zM587 342h1v1h-1zM589 342h1v1h-1zM591 342h1v1h-1zM593 342h1v1h-1zM595 342h1v1h-1zM597 342h1v1h-1zM599 342h1v1h-1zM601 342h1v1h-1zM603 342h1v1h-1zM605 342h1v1h-1zM607 342h1v1h-1zM609 342h1v1h-1zM611 342h1v1h-1zM613 342h1v1h-1zM615 342h1v1h-1zM617 342h1v1h-1zM619 342h1v1h-1zM621 342h1v1h-1zM623 342h1v1h-1zM625 342h1v1h-1zM627 342h1v1h-1zM629 342h1v1h-1zM631 342h1v1h-1zM633 342h1v1h-1zM635 342h1v1h-1zM637 342h1v1h-1zM639 342h1v1h-1zM641 342h1v1h-1zM643 342h1v1h-1zM645 342h1v1h-1zM647 342h1v1h-1zM649 342h1v1h-1zM651 342h1v1h-1zM653 342h1v1h-1zM655 342h1v1h-1zM657 342h1v1h-1zM659 342h1v1h-1zM661 342h1v1h-1zM663 342h1v1h-1zM665 342h1v1h-1zM667 342h1v1h-1zM669 342h1v1h-1zM671 342h1v1h-1zM673 342h1v1h-1zM675 342h1v1h-1zM677 342h1v1h-1zM679 342h1v1h-1zM681 342h1v1h-1zM683 342h1v1h-1zM685 342h1v1h-1zM687 342h1v1h-1zM689 342h1v1h-1zM691 342h1v1h-1zM693 342h1v1h-1zM695 342h1v1h-1zM697 342h1v1h-1zM699 342h1v1h-1zM701 342h1v1h-1zM703 342h1v1h-1zM705 342h1v1h-1zM707 342h1v1h-1zM709 342h1v1h-1zM711 342h1v1h-1zM713 342h1v1h-1zM715 342h1v1h-1zM717 342h1v1h-1zM719 342h1v1h-1zM721 342h1v1h-1zM723 342h1v1h-1zM725 342h1v1h-1zM727 342h1v1h-1zM729 342h1v1h-1zM731 342h1v1h-1zM733 342h1v1h-1zM735 342h1v1h-1zM737 342h1v1h-1zM739 342h1v1h-1zM741 342h1v1h-1zM743 342h1v1h-1zM745 342h1v1h-1zM747 342h1v1h-1zM749 342h1v1h-1zM751 342h1v1h-1zM753 342h1v1h-1zM755 342h1v1h-1zM757 342h1v1h-1zM759 342h1v1h-1zM761 342h1v1h-1zM763 342h1v1h-1zM765 342h1v1h-1zM767 342h1v1h-1zM769 342h1v1h-1zM771 342h1v1h-1zM773 342h1v1h-1zM775 342h1v1h-1zM777 342h1v1h-1zM779 342h1v1h-1zM781 342h1v1h-1zM783 342h1v1h-1zM785 342h1v1h-1zM787 342h1v1h-1zM789 342h1v1h-1zM791 342h1v1h-1zM793 342h1v1h-1zM795 342h1v1h-1zM797 342h1v1h-1zM799 342h1v1h-1zM801 342h1v1h-1zM803 342h1v1h-1zM805 342h1v1h-1zM807 342h1v1h-1zM809 342h1v1h-1zM811 342h1v1h-1zM813 342h1v1h-1zM815 342h1v1h-1zM817 342h1v1h-1zM819 342h1v1h-1zM821 342h1v1h-1zM823 342h1v1h-1zM825 342h1v1h-1zM827 342h1v1h-1zM829 342h1v1h-1zM831 342h1v1h-1zM833 342h1v1h-1zM835 342h1v1h-1zM837 342h1v1h-1zM839 342h1v1h-1zM841 342h1v1h-1zM843 342h1v1h-1zM845 342h1v1h-1zM847 342h1v1h-1zM849 342h1v1h-1zM851 342h1v1h-1zM853 342h1v1h-1zM855 342h1v1h-1zM857 342h1v1h-1zM859 342h1v1h-1zM861 342h1v1h-1zM863 342h1v1h-1zM865 342h1v1h-1zM867 342h1v1h-1zM869 342h1v1h-1zM871 342h1v1h-1zM873 342h1v1h-1zM875 342h1v1h-1zM877 342h1v1h-1zM879 342h1v1h-1zM881 342h1v1h-1zM883 342h1v1h-1zM885 342h1v1h-1zM887 342h1v1h-1zM889 342h1v1h-1zM891 342h1v1h-1zM893 342h1v1h-1zM895 342h1v1h-1zM897 342h1v1h-1zM899 342h1v1h-1zM901 342h1v1h-1zM903 342h1v1h-1zM905 342h1v1h-1zM907 342h1v1h-1zM909 342h1v1h-1zM911 342h1v1h-1zM913 342h1v1h-1zM915 342h1v1h-1zM917 342h1v1h-1zM919 342h1v1h-1zM921 342h1v1h-1zM923 342h1v1h-1zM925 342h1v1h-1zM927 342h1v1h-1zM929 342h1v1h-1zM931 342h1v1h-1zM933 342h1v1h-1zM935 342h1v1h-1zM937 342h1v1h-1zM939 342h1v1h-1zM941 342h1v1h-1zM943 342h1v1h-1zM945 342h1v1h-1zM947 342h1v1h-1zM949 342h1v1h-1zM951 342h1v1h-1zM953 342h1v1h-1zM955 342h1v1h-1zM957 342h1v1h-1zM959 342h1v1h-1zM961 342h1v1h-1zM963 342h1v1h-1zM965 342h1v1h-1zM967 342h1v1h-1zM969 342h1v1h-1zM971 342h1v1h-1zM973 342h1v1h-1zM975 342h1v1h-1zM977 342h1v1h-1zM979 342h1v1h-1zM981 342h1v1h-1zM983 342h1v1h-1zM985 342h1v1h-1zM987 342h1v1h-1zM989 342h1v1h-1zM991 342h1v1h-1zM993 342h1v1h-1zM995 342h1v1h-1zM997 342h1v1h-1zM999 342h1v1h-1zM1001 342h1v1h-1zM1003 342h1v1h-1zM1005 342h1v1h-1zM1007 342h1v1h-1zM1009 342h1v1h-1zM1011 342h1v1h-1zM1013 342h1v1h-1zM1015 342h1v1h-1zM1017 342h1v1h-1zM1019 342h1v1h-1zM41 339h1v1h-1zM41 345h1v1h-1zM41 341h1v3h-1zM61 339h1v1h-1zM61 345h1v1h-1zM61 341h1v3h-1zM81 339h1v1h-1zM81 345h1v1h-1zM81 341h1v3h-1zM101 339h1v1h-1zM101 345h1v1h-1zM101 341h1v3h-1zM121 336h1v1h-1zM121 338h1v1h-1zM121 340h1v1h-1zM121 344h1v1h-1zM121 346h1v1h-1zM121 348h1v1h-1zM141 339h1v1h-1zM141 345h1v1h-1zM141 341h1v3h-1zM161 339h1v1h-1zM161 345h1v1h-1zM161 341h1v3h-1zM181 339h1v1h-1zM181 345h1v1h-1zM181 341h1v3h-1zM201 339h1v1h-1zM201 345h1v1h-1zM201 341h1v3h-1zM221 336h1v1h-1zM221 338h1v1h-1zM221 340h1v1h-1zM221 344h1v1h-1zM221 346h1v1h-1zM221 348h1v1h-1zM241 339h1v1h-1zM241 345h1v1h-1zM241 341h1v3h-1zM261 339h1v1h-1zM261 345h1v1h-1zM261 341h1v3h-1zM281 339h1v1h-1zM281 345h1v1h-1zM281 341h1v3h-1zM301 339h1v1h-1zM301 345h1v1h-1zM301 341h1v3h-1zM321 336h1v1h-1zM321 338h1v1h-1zM321 340h1v1h-1zM321 344h1v1h-1zM321 346h1v1h-1zM321 348h1v1h-1zM341 339h1v1h-1zM341 345h1v1h-1zM341 341h1v3h-1zM361 339h1v1h-1zM361 345h1v1h-1zM361 341h1v3h-1zM381 339h1v1h-1zM381 345h1v1h-1zM381 341h1v3h-1zM401 339h1v1h-1zM401 345h1v1h-1zM401 341h1v3h-1zM421 336h1v1h-1zM421 338h1v1h-1zM421 340h1v1h-1zM421 344h1v1h-1zM421 346h1v1h-1zM421 348h1v1h-1zM441 339h1v1h-1zM441 345h1v1h-1zM441 341h1v3h-1zM461 339h1v1h-1zM461 345h1v1h-1zM461 341h1v3h-1zM481 339h1v1h-1zM481 345h1v1h-1zM481 341h1v3h-1zM501 339h1v1h-1zM501 345h1v1h-1zM501 341h1v3h-1zM541 339h1v1h-1zM541 345h1v1h-1zM541 341h1v3h-1zM561 339h1v1h-1zM561 345h1v1h-1zM561 341h1v3h-1zM581 339h1v1h-1zM581 345h1v1h-1zM581 341h1v3h-1zM601 339h1v1h-1zM601 345h1v1h-1zM601 341h1v3h-1zM621 336h1v1h-1zM621 338h1v1h-1zM621 340h1v1h-1zM621 344h1v1h-1zM621 346h1v1h-1zM621 348h1v1h-1zM641 339h1v1h-1zM641 345h1v1h-1zM641 341h1v3h-1zM661 339h1v1h-1zM661 345h1v1h-1zM661 341h1v3h-1zM681 339h1v1h-1zM681 345h1v1h-1zM681 341h1v3h-1zM701 339h1v1h-1zM701 345h1v1h-1zM701 341h1v3h-1zM721 336h1v1h-1zM721 338h1v1h-1zM721 340h1v1h-1zM721 344h1v1h-1zM721 346h1v1h-1zM721 348h1v1h-1zM741 339h1v1h-1zM741 345h1v1h-1zM741 341h1v3h-1zM761 339h1v1h-1zM761 345h1v1h-1zM761 341h1v3h-1zM781 339h1v1h-1zM781 345h1v1h-1zM781 341h1v3h-1zM801 339h1v1h-1zM801 345h1v1h-1zM801 341h1v3h-1zM821 336h1v1h-1zM821 338h1v1h-1zM821 340h1v1h-1zM821 344h1v1h-1zM821 346h1v1h-1zM821 348h1v1h-1zM841 339h1v1h-1zM841 345h1v1h-1zM841 341h1v3h-1zM861 339h1v1h-1zM861 345h1v1h-1zM861 341h1v3h-1zM881 339h1v1h-1zM881 345h1v1h-1zM881 341h1v3h-1zM901 339h1v1h-1zM901 345h1v1h-1zM901 341h1v3h-1zM921 336h1v1h-1zM921 338h1v1h-1zM921 340h1v1h-1zM921 344h1v1h-1zM921 346h1v1h-1zM921 348h1v1h-1zM941 339h1v1h-1zM941 345h1v1h-1zM941 341h1v3h-1zM961 339h1v1h-1zM961 345h1v1h-1zM961 341h1v3h-1zM981 339h1v1h-1zM981 345h1v1h-1zM981 341h1v3h-1zM1001 339h1v1h-1zM1001 345h1v1h-1zM1001 341h1v3h-1zM521 18h1v1h-1zM521 20h1v1h-1zM521 22h1v1h-1zM521 24h1v1h-1zM521 26h1v1h-1zM521 28h1v1h-1zM521 30h1v1h-1zM521 32h1v1h-1zM521 34h1v1h-1zM521 36h1v1h-1zM521 38h1v1h-1zM521 40h1v1h-1zM521 46h1v1h-1zM521 48h1v1h-1zM521 50h1v1h-1zM521 52h1v1h-1zM521 54h1v1h-1zM521 56h1v1h-1zM521 58h1v1h-1zM521 60h1v1h-1zM521 62h1v1h-1zM521 64h1v1h-1zM521 66h1v1h-1zM521 72h1v1h-1zM521 74h1v1h-1zM521 76h1v1h-1zM521 78h1v1h-1zM521 80h1v1h-1zM521 82h1v1h-1zM521 84h1v1h-1zM521 86h1v1h-1zM521 88h1v1h-1zM521 90h1v1h-1zM521 92h1v1h-1zM521 98h1v1h-1zM521 100h1v1h-1zM521 102h1v1h-1zM521 104h1v1h-1zM521 106h1v1h-1zM521 108h1v1h-1zM521 110h1v1h-1zM521 112h1v1h-1zM521 114h1v1h-1zM521 116h1v1h-1zM521 118h1v1h-1zM521 124h1v1h-1zM521 126h1v1h-1zM521 128h1v1h-1zM521 130h1v1h-1zM521 132h1v1h-1zM521 134h1v1h-1zM521 136h1v1h-1zM521 138h1v1h-1zM521 140h1v1h-1zM521 142h1v1h-1zM521 144h1v1h-1zM521 150h1v1h-1zM521 152h1v1h-1zM521 154h1v1h-1zM521 156h1v1h-1zM521 158h1v1h-1zM521 160h1v1h-1zM521 162h1v1h-1zM521 164h1v1h-1zM521 166h1v1h-1zM521 168h1v1h-1zM521 170h1v1h-1zM521 176h1v1h-1zM521 178h1v1h-1zM521 180h1v1h-1zM521 182h1v1h-1zM521 184h1v1h-1zM521 186h1v1h-1zM521 188h1v1h-1zM521 190h1v1h-1zM521 192h1v1h-1zM521 194h1v1h-1zM521 196h1v1h-1zM521 202h1v1h-1zM521 204h1v1h-1zM521 206h1v1h-1zM521 208h1v1h-1zM521 210h1v1h-1zM521 212h1v1h-1zM521 214h1v1h-1zM521 216h1v1h-1zM521 218h1v1h-1zM521 220h1v1h-1zM521 222h1v1h-1zM521 228h1v1h-1zM521 230h1v1h-1zM521 232h1v1h-1zM521 234h1v1h-1zM521 236h1v1h-1zM521 238h1v1h-1zM521 240h1v1h-1zM521 242h1v1h-1zM521 244h1v1h-1zM521 246h1v1h-1zM521 248h1v1h-1zM521 254h1v1h-1zM521 256h1v1h-1zM521 258h1v1h-1zM521 260h1v1h-1zM521 262h1v1h-1zM521 264h1v1h-1zM521 266h1v1h-1zM521 268h1v1h-1zM521 270h1v1h-1zM521 272h1v1h-1zM521 274h1v1h-1zM521 280h1v1h-1zM521 282h1v1h-1zM521 284h1v1h-1zM521 286h1v1h-1zM521 288h1v1h-1zM521 290h1v1h-1zM521 292h1v1h-1zM521 294h1v1h-1zM521 296h1v1h-1zM521 298h1v1h-1zM521 300h1v1h-1zM521 306h1v1h-1zM521 308h1v1h-1zM521 310h1v1h-1zM521 312h1v1h-1zM521 314h1v1h-1zM521 316h1v1h-1zM521 318h1v1h-1zM521 320h1v1h-1zM521 322h1v1h-1zM521 324h1v1h-1zM521 326h1v1h-1zM521 332h1v1h-1zM521 334h1v1h-1zM521 336h1v1h-1zM521 338h1v1h-1zM521 340h1v1h-1zM521 342h1v1h-1zM521 344h1v1h-1zM521 346h1v1h-1zM521 348h1v1h-1zM521 350h1v1h-1zM521 352h1v1h-1zM521 358h1v1h-1zM521 360h1v1h-1zM521 362h1v1h-1zM521 364h1v1h-1zM521 366h1v1h-1zM521 368h1v1h-1zM521 370h1v1h-1zM521 372h1v1h-1zM521 374h1v1h-1zM521 376h1v1h-1zM521 378h1v1h-1zM521 384h1v1h-1zM521 386h1v1h-1zM521 388h1v1h-1zM521 390h1v1h-1zM521 392h1v1h-1zM521 394h1v1h-1zM521 396h1v1h-1zM521 398h1v1h-1zM521 400h1v1h-1zM521 402h1v1h-1zM521 404h1v1h-1zM521 410h1v1h-1zM521 412h1v1h-1zM521 414h1v1h-1zM521 416h1v1h-1zM521 418h1v1h-1zM521 420h1v1h-1zM521 422h1v1h-1zM521 424h1v1h-1zM521 426h1v1h-1zM521 428h1v1h-1zM521 430h1v1h-1zM521 436h1v1h-1zM521 438h1v1h-1zM521 440h1v1h-1zM521 442h1v1h-1zM521 444h1v1h-1zM521 446h1v1h-1zM521 448h1v1h-1zM521 450h1v1h-1zM521 452h1v1h-1zM521 454h1v1h-1zM521 456h1v1h-1zM521 462h1v1h-1zM521 464h1v1h-1zM521 466h1v1h-1zM521 468h1v1h-1zM521 470h1v1h-1zM521 472h1v1h-1zM521 474h1v1h-1zM521 476h1v1h-1zM521 478h1v1h-1zM521 480h1v1h-1zM521 482h1v1h-1zM521 488h1v1h-1zM521 490h1v1h-1zM521 492h1v1h-1zM521 494h1v1h-1zM521 496h1v1h-1zM521 498h1v1h-1zM521 500h1v1h-1zM521 502h1v1h-1zM521 504h1v1h-1zM521 506h1v1h-1zM521 508h1v1h-1zM521 514h1v1h-1zM521 516h1v1h-1zM521 518h1v1h-1zM521 520h1v1h-1zM521 522h1v1h-1zM521 524h1v1h-1zM521 526h1v1h-1zM521 528h1v1h-1zM521 530h1v1h-1zM521 532h1v1h-1zM521 534h1v1h-1zM521 540h1v1h-1zM521 542h1v1h-1zM521 544h1v1h-1zM521 546h1v1h-1zM521 548h1v1h-1zM521 550h1v1h-1zM521 552h1v1h-1zM521 554h1v1h-1zM521 556h1v1h-1zM521 558h1v1h-1zM521 560h1v1h-1zM521 566h1v1h-1zM521 568h1v1h-1zM521 570h1v1h-1zM521 572h1v1h-1zM521 574h1v1h-1zM521 576h1v1h-1zM521 578h1v1h-1zM521 580h1v1h-1zM521 582h1v1h-1zM521 584h1v1h-1zM521 586h1v1h-1zM521 592h1v1h-1zM521 594h1v1h-1zM521 596h1v1h-1zM521 598h1v1h-1zM521 600h1v1h-1zM521 602h1v1h-1zM521 604h1v1h-1zM521 606h1v1h-1zM521 608h1v1h-1zM521 610h1v1h-1zM521 612h1v1h-1zM521 618h1v1h-1zM521 620h1v1h-1zM521 622h1v1h-1zM521 624h1v1h-1zM521 626h1v1h-1zM521 628h1v1h-1zM521 630h1v1h-1zM521 632h1v1h-1zM521 634h1v1h-1zM521 636h1v1h-1zM521 638h1v1h-1zM521 644h1v1h-1zM521 646h1v1h-1zM521 648h1v1h-1zM521 650h1v1h-1zM521 652h1v1h-1zM521 654h1v1h-1zM521 656h1v1h-1zM521 658h1v1h-1zM521 660h1v1h-1zM521 662h1v1h-1zM521 664h1v1h-1zM521 666h1v1h-1zM518 30h1v1h-1zM524 30h1v1h-1zM520 30h3v1h-3zM518 43h1v1h-1zM524 43h1v1h-1zM521 43h1v1h-1zM518 56h1v1h-1zM524 56h1v1h-1zM520 56h3v1h-3zM518 69h1v1h-1zM524 69h1v1h-1zM521 69h1v1h-1zM515 82h1v1h-1zM517 82h1v1h-1zM519 82h1v1h-1zM521 82h1v1h-1zM523 82h1v1h-1zM525 82h1v1h-1zM527 82h1v1h-1zM518 95h1v1h-1zM524 95h1v1h-1zM521 95h1v1h-1zM518 108h1v1h-1zM524 108h1v1h-1zM520 108h3v1h-3zM518 121h1v1h-1zM524 121h1v1h-1zM521 121h1v1h-1zM518 134h1v1h-1zM524 134h1v1h-1zM520 134h3v1h-3zM515 147h1v1h-1zM517 147h1v1h-1zM519 147h1v1h-1zM521 147h1v1h-1zM523 147h1v1h-1zM525 147h1v1h-1zM527 147h1v1h-1zM518 160h1v1h-1zM524 160h1v1h-1zM520 160h3v1h-3zM518 173h1v1h-1zM524 173h1v1h-1zM521 173h1v1h-1zM518 186h1v1h-1zM524 186h1v1h-1zM520 186h3v1h-3zM518 199h1v1h-1zM524 199h1v1h-1zM521 199h1v1h-1zM515 212h1v1h-1zM517 212h1v1h-1zM519 212h1v1h-1zM521 212h1v1h-1zM523 212h1v1h-1zM525 212h1v1h-1zM527 212h1v1h-1zM518 225h1v1h-1zM524 225h1v1h-1zM521 225h1v1h-1zM518 238h1v1h-1zM524 238h1v1h-1zM520 238h3v1h-3zM518 251h1v1h-1zM524 251h1v1h-1zM521 251h1v1h-1zM518 264h1v1h-1zM524 264h1v1h-1zM520 264h3v1h-3zM515 277h1v1h-1zM517 277h1v1h-1zM519 277h1v1h-1zM521 277h1v1h-1zM523 277h1v1h-1zM525 277h1v1h-1zM527 277h1v1h-1zM518 290h1v1h-1zM524 290h1v1h-1zM520 290h3v1h-3zM518 303h1v1h-1zM524 303h1v1h-1zM521 303h1v1h-1zM518 316h1v1h-1zM524 316h1v1h-1zM520 316h3v1h-3zM518 329h1v1h-1zM524 329h1v1h-1zM521 329h1v1h-1zM515 342h1v1h-1zM517 342h1v1h-1zM519 342h1v1h-1zM521 342h1v1h-1zM523 342h1v1h-1zM525 342h1v1h-1zM527 342h1v1h-1zM518 355h1v1h-1zM524 355h1v1h-1zM521 355h1v1h-1zM518 368h1v1h-1zM524 368h1v1h-1zM520 368h3v1h-3zM518 381h1v1h-1zM524 381h1v1h-1zM521 381h1v1h-1zM518 394h1v1h-1zM524 394h1v1h-1zM520 394h3v1h-3zM515 407h1v1h-1zM517 407h1v1h-1zM519 407h1v1h-1zM521 407h1v1h-1zM523 407h1v1h-1zM525 407h1v1h-1zM527 407h1v1h-1zM518 420h1v1h-1zM524 420h1v1h-1zM520 420h3v1h-3zM518 433h1v1h-1zM524 433h1v1h-1zM521 433h1v1h-1zM518 446h1v1h-1zM524 446h1v1h-1zM520 446h3v1h-3zM518 459h1v1h-1zM524 459h1v1h-1zM521 459h1v1h-1zM515 472h1v1h-1zM517 472h1v1h-1zM519 472h1v1h-1zM521 472h1v1h-1zM523 472h1v1h-1zM525 472h1v1h-1zM527 472h1v1h-1zM518 485h1v1h-1zM524 485h1v1h-1zM521 485h1v1h-1zM518 498h1v1h-1zM524 498h1v1h-1zM520 498h3v1h-3zM518 511h1v1h-1zM524 511h1v1h-1zM521 511h1v1h-1zM518 524h1v1h-1zM524 524h1v1h-1zM520 524h3v1h-3zM515 537h1v1h-1zM517 537h1v1h-1zM519 537h1v1h-1zM521 537h1v1h-1zM523 537h1v1h-1zM525 537h1v1h-1zM527 537h1v1h-1zM518 550h1v1h-1zM524 550h1v1h-1zM520 550h3v1h-3zM518 563h1v1h-1zM524 563h1v1h-1zM521 563h1v1h-1zM518 576h1v1h-1zM524 576h1v1h-1zM520 576h3v1h-3zM518 589h1v1h-1zM524 589h1v1h-1zM521 589h1v1h-1zM515 602h1v1h-1zM517 602h1v1h-1zM519 602h1v1h-1zM521 602h1v1h-1zM523 602h1v1h-1zM525 602h1v1h-1zM527 602h1v1h-1zM518 615h1v1h-1zM524 615h1v1h-1zM521 615h1v1h-1zM518 628h1v1h-1zM524 628h1v1h-1zM520 628h3v1h-3zM518 641h1v1h-1zM524 641h1v1h-1zM521 641h1v1h-1zM518 654h1v1h-1zM524 654h1v1h-1zM520 654h3v1h-3z"/><path fill="#b2a684" opacity=".45" d="M520 43h1v1h-1zM522 43h1v1h-1zM521 42h1v1h-1zM521 44h1v1h-1zM520 69h1v1h-1zM522 69h1v1h-1zM521 68h1v1h-1zM521 70h1v1h-1zM520 95h1v1h-1zM522 95h1v1h-1zM521 94h1v1h-1zM521 96h1v1h-1zM520 121h1v1h-1zM522 121h1v1h-1zM521 120h1v1h-1zM521 122h1v1h-1zM520 173h1v1h-1zM522 173h1v1h-1zM521 172h1v1h-1zM521 174h1v1h-1zM520 199h1v1h-1zM522 199h1v1h-1zM521 198h1v1h-1zM521 200h1v1h-1zM520 225h1v1h-1zM522 225h1v1h-1zM521 224h1v1h-1zM521 226h1v1h-1zM520 251h1v1h-1zM522 251h1v1h-1zM521 250h1v1h-1zM521 252h1v1h-1zM520 303h1v1h-1zM522 303h1v1h-1zM521 302h1v1h-1zM521 304h1v1h-1zM520 329h1v1h-1zM522 329h1v1h-1zM521 328h1v1h-1zM521 330h1v1h-1zM520 355h1v1h-1zM522 355h1v1h-1zM521 354h1v1h-1zM521 356h1v1h-1zM520 381h1v1h-1zM522 381h1v1h-1zM521 380h1v1h-1zM521 382h1v1h-1zM520 433h1v1h-1zM522 433h1v1h-1zM521 432h1v1h-1zM521 434h1v1h-1zM520 459h1v1h-1zM522 459h1v1h-1zM521 458h1v1h-1zM521 460h1v1h-1zM520 485h1v1h-1zM522 485h1v1h-1zM521 484h1v1h-1zM521 486h1v1h-1zM520 511h1v1h-1zM522 511h1v1h-1zM521 510h1v1h-1zM521 512h1v1h-1zM520 563h1v1h-1zM522 563h1v1h-1zM521 562h1v1h-1zM521 564h1v1h-1zM520 589h1v1h-1zM522 589h1v1h-1zM521 588h1v1h-1zM521 590h1v1h-1zM520 615h1v1h-1zM522 615h1v1h-1zM521 614h1v1h-1zM521 616h1v1h-1zM520 641h1v1h-1zM522 641h1v1h-1zM521 640h1v1h-1zM521 642h1v1h-1z"/>
<path fill="none" stroke="#f010f0" stroke-width="1" d="M21 102v13M22 110v6M23 106v9M24 110v6M25 108v8M26 108v7M27 108v7M28 106v11M29 108v7M30 106v11M31 106v9M32 108v7M33 106v10M34 106v9M35 108v7M36 106v10M37 106v14M38 108v7M39 108v9M40 106v10M41 106v9M42 108v7M43 108v7M44 108v7M45 106v11M46 108v7M47 106v9M48 106v9M49 107v9M50 106v11M51 106v10M52 108v12M53 108v8M54 108v8M55 108v7M56 106v10M57 106v10M58 106v10M59 106v9M60 108v9M61 108v9M62 108v9M63 106v11M64 110v4M65 108v9M66 110v4M67 108v9M68 108v8M69 106v14M70 106v11M71 108v7M72 108v7M73 108v8M74 108v7M75 106v9M76 108v8M77 108v8M78 106v9M79 108v9M80 108v8M81 108v7M82 108v7M83 106v9M84 103v14M85 107v8M86 106v9M87 108v9M88 106v9M89 106v9M90 108v8M91 108v7M92 106v11M93 108v7M94 107v9M95 105v13M96 108v9M97 106v11M98 107v8M99 108v9M100 108v7M101 108v7M102 105v10M103 106v9M104 108v6M105 108v7M106 105v10M107 108v9M108 108v7M109 106v10M110 108v7M111 106v9M112 104v11M113 108v9M114 108v11M115 108v9M116 108v7M117 106v9M118 108v7M119 106v8M120 108v7M121 106v11M122 108v13M123 108v9M124 108v7M125 106v9M126 108v8M127 110v4M128 107v8M129 106v9M130 108v7M131 106v11M132 106v14M133 108v7M134 106v11M135 110v4M136 108v8M137 108v9M138 107v10M139 106v9M140 106v9M141 106v9M142 108v8M143 108v9M144 107v9M145 106v9M146 108v7M147 106v11M148 110v4M149 108v8M150 106v11M151 108v12M152 108v7M153 107v13M154 106v14M155 106v10M156 103v12M157 109v5M158 106v9M159 110v6M160 108v6M161 108v7M162 108v7M163 108v9M164 106v9M165 105v12M166 106v9M167 110v6M168 106v12M169 106v11M170 108v9M171 108v6M172 106v9M173 106v11M174 104v11M175 106v10M176 107v9M177 108v7M178 106v11M179 108v9M180 108v7M181 108v7M182 108v9M183 108v7M184 106v11M185 108v7M186 107v9M187 108v7M188 108v8M189 108v7M190 106v13M191 108v7M192 108v7M193 107v8M194 108v7M195 107v8M196 108v8M197 110v4M198 106v9M199 108v7M200 107v10M201 106v11M202 106v9M203 106v9M204 106v14M205 106v9M206 108v7M207 108v7M208 108v8M209 106v10M210 108v7M211 102v13M212 106v9M213 108v7M214 106v9M215 107v10M216 106v16M217 106v9M218 105v12M219 108v12M220 108v13M221 108v7M222 108v7M223 108v7M224 108v8M225 108v8M226 105v10M227 107v9M228 108v7M229 108v8M230 106v10M231 106v9M232 108v8M233 106v9M234 106v11M235 107v7M236 106v9M237 104v13M238 106v9M239 107v14M240 106v13M241 104v14M242 108v9M243 102v18M244 108v9M245 106v9M246 108v7M247 107v8M248 107v9M249 108v7M250 108v8M251 106v13M252 106v9M253 106v9M254 108v11M255 104v11M256 108v7M257 106v11M258 107v10M259 108v12M260 107v8M261 103v15M262 106v11M263 106v10M264 108v7M265 108v9M266 108v8M267 108v7M268 108v8M269 106v11M270 106v9M271 106v9M272 108v8M273 106v10M274 108v7M275 108v8M276 108v7M277 106v9M278 108v7M279 108v8M280 108v13M281 106v9M282 108v8M283 106v11M284 108v7M285 108v9M286 108v13M287 108v8M288 108v7M289 108v8M290 106v9M291 106v11M292 108v8M293 108v7M294 106v10M295 108v9M296 108v7M297 108v8M298 106v11M299 106v10M300 107v10M301 107v9M302 106v9M303 106v9M304 106v10M305 108v8M306 108v7M307 106v9M308 108v8M309 106v9M310 105v12M311 106v9M312 108v7M313 107v10M314 108v9M315 106v9M316 108v7M317 106v10M318 108v8M319 107v9M320 107v9M321 106v9M322 108v7M323 106v11M324 106v9M325 108v7M326 108v7M327 108v7M328 105v11M329 106v11M330 103v14M331 108v9M332 106v9M333 108v7M334 108v7M335 106v9M336 108v7M337 105v10M338 108v9M339 106v9M340 106v9M341 108v9M342 103v13M343 106v9M344 106v9M345 105v12M346 108v7M347 108v8M348 106v10M349 106v9M350 107v8M351 107v8M352 106v9M353 106v11M354 108v7M355 106v11M356 106v10M357 105v10M358 110v4M359 106v9M360 104v11M361 105v9M362 106v16M363 108v7M364 106v9M365 110v4M366 108v7M367 106v12M368 107v10M369 107v10M370 108v7M371 108v11M372 108v9M373 108v7M374 106v9M375 108v7M376 108v12M377 106v9M378 106v9M379 108v9M380 106v11M381 108v13M382 108v7M383 106v9M384 108v8M385 108v7M386 108v7M387 106v10M388 104v12M389 108v8M390 108v6M391 107v8M392 108v8M393 106v9M394 106v11M395 104v13M396 108v7M397 109v5M398 107v8M399 108v9M400 108v8M401 107v8M402 108v7M403 108v7M404 105v12M405 108v8M406 102v15M407 106v11M408 108v7M409 108v7M410 106v9M411 108v8M412 108v7M413 108v8M414 108v8M415 106v9M416 107v9M417 106v9M418 106v10M419 108v8M420 106v9M421 106v10M422 107v12M423 106v9M424 108v7M425 106v10M426 107v8M427 106v10M428 104v13M429 106v11M430 107v8M431 106v10M432 106v9M433 106v10M434 106v9M435 108v8M436 110v4M437 107v10M438 106v11M439 108v7M440 106v9M441 106v10M442 106v10M443 108v7M444 106v9M445 108v9M446 104v11M447 108v10M448 108v7M449 108v7M450 108v7M451 104v13M452 106v9M453 107v11M454 108v8M455 108v9M456 108v7M457 107v10M458 108v7M459 106v13M460 108v11M461 106v10M462 106v9M463 108v9M464 108v8M465 108v7M466 106v11M467 106v9M468 108v8M469 106v9M470 106v10M471 108v7M472 106v9M473 106v9M474 108v7M475 107v8M476 108v9M477 108v8M478 108v8M479 106v10M480 105v10M481 106v9M482 107v8M483 107v10M484 108v8M485 105v10M486 106v9M487 108v8M488 106v10M489 106v9M490 104v13M491 107v8M492 107v8M493 108v7M494 106v11M495 106v9M496 108v7M497 108v7M498 105v10M499 108v8M500 108v7M501 110v4M502 106v9M503 107v8M504 106v9M505 107v13M506 108v8M507 108v7M508 106v11M509 106v9M510 110v4M511 106v9M512 108v8M513 108v7M514 108v9M515 108v14M516 106v9M517 108v9M518 106v9M519 106v9M520 108v8M521 106v11M522 108v7M523 108v8M524 108v9M525 108v7M526 108v8M527 108v7M528 108v7M529 106v11M530 106v12M531 110v5M532 106v10M533 108v7M534 108v8M535 108v8M536 108v8M537 108v6M538 102v13M539 108v9M540 107v10M541 109v7M542 104v11M543 106v11M544 108v7M545 108v7M546 106v16M547 108v6M548 108v7M549 108v8M550 108v7M551 108v9M552 107v8M553 107v9M554 106v11M555 106v10M556 108v7M557 106v11M558 108v7M559 106v9M560 108v8M561 106v9M562 107v8M563 110v4M564 107v8M565 108v7M566 108v7M567 106v9M568 106v11M569 106v9M570 106v14M571 106v9M572 110v4M573 108v8M574 108v8M575 106v9M576 106v10M577 107v8M578 106v9M579 108v7M580 108v7M581 108v7M582 106v11M583 106v13M584 108v9M585 106v11M586 108v7M587 108v8M588 107v10M589 107v8M590 106v9M591 106v9M592 106v9M593 108v8M594 108v7M595 108v7M596 104v12M597 108v7M598 110v6M599 108v12M600 108v7M601 108v8M602 108v7M603 104v11M604 104v11M605 106v11M606 106v11M607 106v11M608 108v7M609 106v9M610 108v7M611 106v10M612 106v10M613 106v10M614 106v9M615 107v9M616 102v13M617 108v7M618 106v9M619 108v8M620 108v9M621 106v10M622 106v9M623 108v7M624 108v8M625 106v9M626 107v9M627 106v9M628 106v13M629 106v11M630 106v9M631 106v14M632 106v11M633 108v7M634 106v16M635 106v9M636 108v9M637 106v11M638 108v7M639 106v9M640 108v9M641 108v7M642 108v8M643 107v14M644 108v9M645 108v7M646 106v11M647 106v9M648 106v9M649 106v9M650 108v9M651 108v7M652 108v10M653 106v9M654 108v7M655 108v9M656 106v9M657 106v9M658 108v9M659 106v9M660 108v7M661 108v8M662 108v7M663 108v6M664 108v7M665 106v9M666 108v7M667 110v5M668 106v13M669 106v11M670 108v8M671 108v9M672 106v12M673 106v14M674 107v8M675 108v9M676 105v10M677 108v8M678 106v9M679 108v7M680 108v9M681 108v7M682 108v7M683 108v7M684 108v6M685 106v9M686 108v7M687 106v10M688 106v9M689 105v10M690 108v8M691 106v9M692 108v9M693 106v11M694 107v8M695 108v7M696 106v9M697 106v11M698 103v14M699 108v9M700 106v9M701 108v8M702 106v11M703 108v9M704 108v8M705 106v10M706 106v9M707 108v9M708 108v9M709 106v9M710 107v9M711 108v11M712 106v11M713 106v13M714 108v12M715 108v8M716 108v9M717 106v11M718 107v9M719 106v13M720 108v8M721 106v9M722 106v11M723 106v11M724 106v11M725 108v8M726 106v9M727 107v12M728 106v12M729 106v9M730 108v9M731 106v11M732 108v7M733 107v8M734 108v7M735 106v9M736 108v7M737 108v8M738 106v10M739 107v8M740 108v7M741 110v5M742 108v6M743 107v8M744 108v7M745 107v9M746 108v8M747 104v11M748 106v9M749 108v9M750 108v8M751 108v9M752 106v9M753 107v11M754 108v8M755 107v8M756 104v12M757 107v9M758 106v10M759 106v9M760 108v7M761 108v8M762 108v7M763 106v10M764 107v10M765 106v9M766 108v6M767 106v9M768 106v10M769 108v7M770 108v7M771 106v11M772 106v9M773 108v9M774 106v11M775 108v7M776 108v7M777 110v6M778 108v7M779 105v10M780 108v7M781 106v9M782 108v7M783 108v7M784 110v4M785 106v9M786 106v9M787 108v7M788 108v7M789 108v9M790 108v7M791 108v9M792 108v7M793 108v7M794 108v8M795 109v6M796 108v9M797 102v17M798 108v7M799 106v9M800 106v11M801 102v13M802 106v9M803 108v8M804 106v9M805 104v12M806 107v8M807 105v12M808 108v7M809 107v10M810 106v9M811 106v10M812 108v7M813 107v8M814 107v9M815 108v9M816 108v7M817 106v10M818 107v9M819 108v7M820 108v7M821 106v11M822 106v9M823 108v9M824 106v11M825 108v7M826 108v8M827 108v9M828 108v7M829 106v10M830 108v7M831 107v9M832 107v8M833 104v13M834 106v9M835 106v9M836 110v4M837 106v9M838 108v8M839 103v12M840 106v10M841 108v7M842 106v10M843 106v13M844 104v11M845 106v11M846 108v7M847 106v10M848 108v9M849 108v7M850 106v9M851 108v8M852 108v9M853 108v9M854 106v9M855 106v9M856 106v10M857 108v9M858 106v11M859 108v9M860 106v9M861 108v7M862 106v10M863 109v5M864 106v9M865 106v10M866 106v9M867 108v8M868 108v8M869 108v9M870 108v7M871 108v7M872 108v7M873 110v4M874 108v7M875 107v10M876 108v8M877 107v8M878 106v9M879 108v7M880 108v7M881 108v7M882 108v7M883 108v7M884 106v9M885 108v6M886 107v8M887 108v7M888 108v7M889 107v14M890 110v5M891 110v6M892 106v11M893 104v13M894 106v10M895 106v11M896 108v7M897 108v7M898 104v17M899 106v9M900 108v7M901 108v7M902 106v9M903 106v10M904 108v7M905 106v11M906 106v11M907 108v9M908 108v7M909 108v8M910 106v11M911 108v8M912 106v9M913 106v10M914 110v4M915 108v7M916 107v9M917 107v8M918 108v8M919 108v7M920 106v11M921 106v10M922 108v9M923 108v9M924 106v10M925 106v10M926 108v7M927 108v7M928 108v10M929 106v9M930 106v9M931 108v8M932 106v9M933 106v12M934 106v9M935 104v15M936 106v9M937 108v9M938 108v11M939 106v9M940 108v7M941 108v9M942 104v11M943 106v9M944 106v11M945 108v9M946 108v9M947 107v8M948 106v11M949 108v7M950 108v9M951 106v9M952 108v9M953 106v11M954 108v7M955 106v9M956 106v9M957 108v8M958 108v8M959 106v9M960 107v8M961 108v8M962 106v9M963 108v7M964 108v7M965 108v7M966 106v11M967 108v11M968 108v7M969 106v9M970 106v11M971 108v7M972 108v14M973 104v13M974 106v9M975 108v9M976 108v7M977 108v9M978 108v8M979 108v7M980 107v9M981 107v13M982 108v9M983 108v7M984 108v9M985 106v10M986 108v7M987 106v10M988 108v6M989 107v8M990 108v8M991 108v9M992 108v7M993 107v9M994 108v7M995 108v9M996 108v7M997 108v9M998 108v9M999 106v9M1000 108v8M1001 106v9M1002 107v9M1003 106v9M1004 108v7M1005 108v8M1006 107v10M1007 106v11M1008 108v8M1009 108v9M1010 108v7M1011 110v5M1012 106v9M1013 108v7M1014 108v7M1015 106v16M1016 108v8M1017 108v7M1018 106v9M1019 106v10M1020 108v7" transform="translate(.5 0)"/>
<path fill="none" stroke="#00dc00" stroke-width="1" d="M21 184v11M22 186v13M23 186v7M24 184v9M25 184v9M26 186v8M27 186v9M28 184v9M29 186v9M30 184v9M31 186v9M32 184v9M33 184v9M34 184v10M35 186v11M36 186v7M37 186v9M38 184v11M39 184v9M40 186v9M41 186v8M42 185v9M43 185v10M44 184v9M45 186v7M46 186v7M47 184v11M48 186v8M49 184v10M50 185v8M51 186v7M52 184v10M53 184v14M54 184v10M55 184v10M56 186v7M57 185v13M58 184v9M59 185v8M60 186v9M61 186v7M62 184v10M63 182v11M64 184v9M65 186v7M66 185v10M67 186v13M68 186v8M69 188v4M70 185v8M71 186v9M72 186v8M73 184v9M74 184v9M75 186v9M76 186v8M77 186v7M78 186v9M79 186v8M80 186v10M81 186v7M82 185v9M83 184v9M84 184v10M85 185v9M86 186v8M87 184v9M88 184v9M89 184v10M90 184v9M91 186v9M92 186v9M93 186v7M94 186v7M95 186v9M96 185v8M97 186v9M98 184v11M99 182v11M100 186v8M101 186v7M102 184v9M103 184v9M104 186v7M105 185v8M106 185v8M107 186v9M108 184v11M109 186v8M110 186v8M111 184v15M112 184v9M113 184v9M114 184v9M115 184v9M116 185v10M117 186v8M118 186v7M119 184v11M120 186v7M121 184v9M122 186v7M123 186v9M124 188v6M125 184v9M126 186v7M127 186v7M128 186v10M129 186v7M130 188v5M131 186v13M132 186v9M133 188v5M134 184v9M135 184v11M136 185v8M137 186v7M138 186v7M139 186v7M140 186v9M141 186v7M142 186v9M143 184v9M144 185v9M145 186v7M146 184v9M147 186v7M148 184v9M149 184v11M150 185v8M151 186v7M152 186v7M153 186v12M154 183v12M155 186v9M156 186v7M157 186v7M158 185v8M159 184v11M160 186v7M161 184v10M162 184v10M163 186v9M164 185v9M165 185v8M166 186v7M167 186v7M168 186v9M169 186v7M170 186v7M171 186v8M172 185v10M173 184v9M174 184v9M175 186v8M176 184v10M177 186v7M178 186v9M179 186v8M180 186v9M181 184v9M182 186v7M183 184v11M184 185v8M185 186v7M186 184v9M187 185v9M188 184v11M189 184v9M190 184v10M191 185v10M192 184v9M193 186v7M194 182v13M195 184v14M196 184v9M197 184v9M198 186v7M199 184v9M200 184v11M201 186v7M202 186v9M203 184v9M204 186v7M205 185v8M206 186v9M207 184v9M208 184v10M209 186v9M210 186v13M211 186v10M212 186v7M213 186v8M214 186v7M215 186v9M216 184v11M217 186v7M218 186v8M219 185v8M220 186v9M221 183v11M222 186v9M223 184v9M224 186v9M225 186v8M226 186v7M227 186v8M228 186v9M229 186v7M230 184v14M231 186v6M232 184v10M233 186v9M234 186v7M235 184v10M236 184v9M237 185v10M238 183v12M239 184v11M240 186v9M241 185v9M242 184v9M243 186v9M244 184v10M245 186v9M246 186v7M247 186v9M248 184v13M249 184v11M250 186v9M251 184v9M252 186v10M253 186v9M254 186v7M255 186v9M256 184v9M257 186v7M258 184v10M259 184v9M260 184v9M261 186v7M262 186v7M263 186v6M264 184v10M265 186v8M266 182v11M267 184v10M268 186v9M269 184v11M270 186v9M271 185v10M272 185v10M273 186v7M274 186v7M275 184v10M276 184v10M277 186v8M278 187v6M279 186v8M280 184v9M281 184v11M282 186v8M283 186v9M284 185v8M285 186v7M286 184v10M287 184v15M288 184v9M289 186v7M290 184v11M291 188v5M292 186v7M293 186v7M294 184v10M295 186v8M296 184v10M297 186v7M298 184v9M299 183v10M300 185v9M301 186v8M302 186v7M303 185v8M304 184v11M305 184v9M306 186v7M307 184v10M308 184v9M309 188v4M310 183v10M311 186v9M312 184v11M313 184v9M314 184v9M315 186v13M316 184v11M317 184v9M318 188v6M319 184v9M320 186v7M321 184v10M322 186v9M323 184v11M324 184v9M325 184v9M326 184v11M327 183v10M328 186v7M329 186v9M330 184v9M331 184v11M332 184v9M333 185v9M334 186v8M335 186v7M336 186v9M337 184v9M338 185v8M339 184v10M340 184v9M341 185v8M342 185v8M343 184v9M344 182v11M345 186v9M346 186v8M347 186v9M348 185v8M349 184v10M350 186v7M351 184v10M352 185v8M353 186v7M354 184v11M355 184v8M356 185v8M357 186v8M358 184v9M359 186v9M360 184v9M361 186v8M362 184v9M363 184v10M364 186v8M365 181v14M366 186v8M367 184v10M368 185v8M369 186v11M370 186v9M371 186v7M372 184v9M373 186v9M374 182v13M375 182v13M376 184v9M377 186v14M378 181v15M379 184v9M380 184v9M381 184v10M382 186v9M383 186v9M384 186v7M385 187v5M386 184v10M387 186v9M388 186v9M389 186v9M390 188v5M391 186v8M392 184v9M393 184v9M394 184v14M395 184v9M396 182v11M397 184v9M398 184v9M399 185v9M400 184v11M401 185v9M402 185v10M403 186v12M404 184v9M405 186v7M406 186v8M407 183v10M408 186v9M409 184v9M410 186v7M411 184v10M412 184v9M413 186v7M414 186v8M415 184v11M416 184v11M417 186v8M418 186v7M419 184v11M420 186v10M421 184v9M422 184v9M423 186v7M424 184v11M425 186v8M426 186v6M427 186v7M428 184v16M429 186v7M430 184v10M431 184v11M432 184v9M433 184v11M434 186v9M435 186v9M436 186v7M437 184v10M438 186v12M439 184v11M440 188v5M441 186v9M442 186v8M443 186v7M444 186v9M445 184v11M446 184v9M447 185v9M448 186v7M449 186v7M450 184v11M451 186v8M452 186v7M453 186v7M454 184v9M455 186v7M456 184v9M457 185v8M458 186v7M459 184v10M460 184v9M461 186v7M462 186v7M463 186v7M464 180v15M465 186v7M466 184v10M467 186v7M468 184v11M469 186v9M470 185v10M471 184v14M472 186v11M473 184v11M474 184v11M475 186v8M476 184v11M477 186v8M478 184v9M479 184v9M480 186v8M481 184v9M482 185v8M483 186v9M484 185v8M485 186v9M486 186v9M487 186v9M488 184v9M489 186v8M490 186v8M491 184v11M492 184v14M493 184v9M494 186v7M495 184v9M496 186v7M497 184v9M498 186v7M499 184v9M500 180v13M501 186v9M502 184v13M503 186v8M504 184v9M505 186v7M506 186v7M507 186v7M508 186v7M509 186v9M510 185v9M511 184v9M512 186v8M513 184v9M514 188v4M515 184v11M516 186v7M517 184v9M518 184v9M519 186v8M520 186v9M521 186v12M522 184v11M523 184v13M524 186v7M525 182v11M526 188v4M527 186v7M528 186v7M529 186v8M530 186v9M531 184v9M532 186v9M533 186v7M534 184v10M535 186v7M536 186v9M537 186v7M538 182v12M539 186v7M540 186v9M541 186v7M542 186v9M543 186v8M544 186v8M545 186v7M546 188v5M547 185v10M548 186v12M549 186v7M550 184v10M551 185v8M552 186v8M553 186v7M554 184v10M555 186v6M556 186v9M557 184v12M558 186v8M559 186v9M560 186v8M561 186v13M562 184v9M563 184v9M564 184v10M565 186v7M566 186v7M567 186v7M568 184v11M569 185v8M570 180v13M571 186v8M572 186v8M573 184v10M574 184v11M575 186v7M576 186v7M577 185v8M578 184v9M579 186v7M580 184v10M581 186v7M582 184v14M583 186v8M584 184v9M585 185v8M586 187v6M587 186v8M588 186v9M589 184v9M590 184v10M591 184v13M592 186v8M593 184v12M594 188v6M595 183v12M596 186v7M597 184v14M598 186v9M599 185v10M600 184v10M601 184v9M602 184v11M603 186v7M604 188v4M605 181v14M606 186v9M607 186v9M608 184v10M609 186v8M610 184v9M611 186v9M612 186v9M613 184v10M614 186v8M615 186v7M616 188v4M617 186v8M618 182v11M619 184v10M620 186v9M621 188v6M622 186v8M623 186v7M624 184v10M625 186v10M626 185v8M627 184v9M628 184v9M629 186v7M630 184v9M631 184v9M632 186v9M633 186v8M634 185v8M635 186v7M636 186v7M637 186v8M638 186v9M639 184v9M640 185v12M641 186v7M642 184v9M643 184v9M644 184v10M645 186v9M646 186v7M647 185v10M648 184v11M649 186v7M650 186v7M651 182v11M652 184v9M653 186v7M654 186v7M655 186v8M656 186v9M657 185v10M658 186v7M659 186v8M660 186v7M661 184v10M662 184v10M663 186v7M664 182v12M665 186v8M666 186v8M667 186v9M668 184v9M669 186v7M670 185v10M671 186v7M672 186v9M673 186v7M674 186v7M675 186v9M676 186v7M677 185v10M678 185v10M679 184v9M680 186v8M681 184v10M682 184v13M683 184v10M684 184v9M685 186v7M686 185v8M687 186v7M688 186v7M689 186v7M690 186v7M691 182v12M692 184v10M693 186v6M694 186v9M695 186v7M696 185v8M697 188v5M698 186v7M699 186v9M700 184v9M701 184v9M702 184v9M703 186v9M704 184v9M705 184v10M706 186v7M707 186v8M708 185v10M709 182v12M710 186v8M711 186v7M712 186v7M713 184v9M714 184v9M715 186v7M716 186v7M717 186v7M718 186v7M719 186v9M720 185v8M721 184v9M722 186v9M723 184v9M724 186v7M725 186v7M726 184v9M727 186v7M728 186v7M729 184v9M730 186v8M731 184v11M732 186v9M733 184v11M734 186v9M735 186v8M736 184v9M737 184v10M738 184v9M739 186v9M740 186v9M741 184v11M742 184v10M743 186v7M744 183v12M745 184v11M746 186v7M747 186v7M748 184v9M749 184v9M750 186v7M751 184v9M752 186v8M753 184v9M754 185v8M755 186v7M756 186v9M757 186v7M758 184v10M759 186v7M760 186v8M761 185v10M762 184v10M763 186v9M764 186v7M765 186v8M766 184v9M767 186v8M768 186v9M769 186v7M770 184v9M771 186v9M772 186v9M773 184v11M774 184v9M775 184v14M776 184v11M777 184v11M778 186v9M779 186v8M780 186v7M781 186v7M782 184v9M783 184v10M784 184v11M785 184v11M786 186v8M787 185v10M788 186v9M789 184v10M790 186v7M791 184v9M792 186v9M793 186v7M794 186v7M795 185v9M796 185v9M797 184v10M798 184v11M799 184v9M800 184v10M801 186v6M802 186v7M803 182v12M804 186v7M805 186v9M806 184v10M807 184v9M808 184v10M809 185v8M810 184v11M811 186v7M812 186v9M813 184v11M814 186v7M815 184v10M816 182v11M817 186v9M818 186v8M819 186v9M820 186v8M821 184v9M822 184v9M823 183v9M824 184v11M825 186v8M826 184v10M827 186v7M828 186v9M829 186v7M830 186v9M831 184v9M832 186v7M833 185v8M834 186v12M835 184v11M836 184v10M837 186v7M838 184v9M839 186v9M840 186v9M841 185v10M842 184v9M843 185v10M844 184v11M845 186v9M846 186v7M847 184v11M848 186v7M849 185v10M850 186v7M851 186v7M852 186v7M853 186v7M854 184v11M855 183v11M856 186v9M857 184v9M858 184v9M859 186v8M860 186v8M861 186v8M862 186v9M863 186v9M864 185v12M865 184v9M866 184v14M867 186v7M868 186v8M869 184v9M870 186v7M871 186v7M872 186v8M873 185v10M874 185v10M875 188v4M876 184v9M877 186v9M878 186v7M879 184v9M880 185v10M881 186v13M882 186v14M883 186v7M884 184v9M885 186v8M886 184v9M887 183v12M888 184v14M889 184v9M890 186v7M891 186v7M892 187v5M893 184v10M894 185v8M895 186v8M896 186v9M897 184v9M898 186v7M899 185v9M900 184v10M901 184v9M902 182v11M903 184v11M904 184v11M905 184v9M906 184v9M907 184v11M908 185v8M909 186v9M910 184v11M911 186v8M912 181v12M913 188v4M914 185v10M915 185v9M916 185v8M917 184v11M918 186v7M919 186v9M920 186v8M921 184v11M922 186v8M923 184v11M924 186v8M925 184v14M926 185v13M927 186v9M928 186v11M929 186v7M930 184v10M931 186v7M932 185v8M933 186v7M934 184v9M935 184v10M936 184v11M937 186v7M938 186v8M939 184v9M940 184v9M941 184v9M942 184v9M943 186v7M944 186v8M945 184v9M946 186v9M947 186v8M948 181v14M949 184v10M950 186v7M951 186v9M952 180v14M953 185v8M954 186v13M955 185v12M956 184v15M957 184v11M958 186v6M959 186v9M960 186v7M961 186v7M962 184v9M963 184v9M964 184v10M965 184v9M966 186v7M967 186v8M968 186v8M969 186v13M970 184v9M971 185v9M972 184v9M973 184v11M974 181v13M975 186v8M976 184v10M977 186v9M978 184v9M979 185v8M980 184v10M981 184v9M982 186v9M983 186v7M984 184v11M985 184v11M986 186v8M987 186v9M988 186v7M989 185v12M990 186v8M991 186v9M992 184v9M993 186v7M994 188v4M995 184v9M996 186v7M997 186v7M998 186v7M999 186v9M1000 185v14M1001 184v10M1002 186v7M1003 185v13M1004 180v14M1005 184v9M1006 182v13M1007 183v10M1008 186v9M1009 186v8M1010 186v7M1011 184v11M1012 182v12M1013 186v9M1014 186v7M1015 186v7M1016 186v9M1017 184v10M1018 186v8M1019 186v8M1020 186v9" transform="translate(.5 0)"/>
<path fill="none" stroke="#00e0e0" stroke-width="1" d="M21 310v9M22 309v10M23 309v9M24 309v10M25 309v9M26 311v8M27 311v9M28 309v13M29 309v11M30 309v10M31 311v9M32 307v14M33 309v10M34 309v11M35 311v7M36 309v10M37 311v7M38 309v11M39 310v14M40 312v6M41 310v8M42 309v10M43 311v8M44 309v10M45 311v7M46 309v14M47 311v9M48 309v10M49 311v7M50 311v8M51 311v7M52 309v9M53 309v10M54 309v12M55 311v8M56 309v11M57 309v10M58 313v5M59 311v7M60 309v10M61 310v8M62 311v9M63 311v9M64 311v9M65 311v8M66 311v8M67 311v7M68 307v11M69 309v11M70 311v9M71 311v8M72 311v8M73 311v9M74 311v7M75 313v4M76 309v11M77 309v11M78 309v10M79 311v9M80 311v7M81 309v10M82 311v9M83 311v8M84 309v9M85 310v12M86 311v7M87 309v11M88 309v11M89 309v13M90 309v9M91 311v8M92 310v8M93 311v7M94 311v7M95 311v7M96 310v8M97 309v10M98 306v12M99 311v7M100 309v10M101 309v9M102 310v9M103 310v8M104 310v10M105 311v12M106 306v12M107 311v8M108 309v9M109 309v10M110 311v9M111 309v9M112 309v11M113 310v8M114 309v10M115 309v10M116 311v9M117 309v9M118 311v9M119 309v9M120 309v10M121 309v11M122 310v8M123 309v11M124 313v4M125 309v10M126 309v9M127 311v8M128 310v9M129 309v11M130 310v8M131 311v7M132 309v9M133 310v9M134 311v9M135 311v7M136 311v7M137 311v7M138 311v9M139 309v9M140 311v8M141 309v11M142 305v15M143 311v7M144 310v9M145 309v9M146 311v9M147 310v8M148 309v11M149 311v9M150 311v9M151 311v7M152 311v7M153 309v11M154 309v9M155 311v7M156 311v7M157 310v10M158 309v9M159 309v10M160 311v7M161 313v5M162 310v9M163 311v9M164 311v7M165 310v8M166 311v7M167 311v13M168 311v7M169 311v8M170 309v10M171 311v8M172 306v12M173 307v13M174 311v9M175 311v8M176 311v8M177 311v7M178 309v9M179 311v14M180 311v8M181 311v7M182 311v8M183 311v7M184 309v9M185 309v9M186 309v9M187 311v6M188 310v10M189 309v9M190 309v8M191 309v9M192 310v8M193 309v10M194 309v16M195 311v9M196 312v7M197 311v7M198 311v9M199 309v9M200 311v8M201 311v7M202 311v12M203 311v7M204 309v9M205 306v12M206 309v9M207 311v9M208 311v8M209 313v5M210 310v8M211 311v9M212 311v8M213 309v10M214 309v10M215 309v9M216 311v7M217 311v7M218 311v7M219 309v9M220 311v8M221 311v11M222 310v10M223 311v7M224 311v7M225 310v9M226 311v9M227 311v7M228 310v8M229 309v10M230 307v14M231 311v7M232 313v4M233 309v9M234 311v8M235 311v7M236 309v10M237 309v9M238 309v9M239 310v10M240 311v8M241 311v9M242 311v7M243 311v7M244 306v12M245 309v9M246 311v7M247 311v8M248 311v13M249 311v9M250 311v7M251 309v9M252 309v9M253 311v8M254 310v8M255 309v10M256 311v7M257 309v11M258 309v11M259 310v8M260 309v16M261 309v10M262 311v9M263 309v10M264 311v9M265 311v7M266 309v11M267 311v7M268 309v11M269 309v10M270 310v10M271 311v7M272 309v10M273 310v7M274 311v7M275 311v11M276 310v8M277 311v7M278 311v7M279 308v10M280 311v9M281 307v12M282 310v10M283 309v11M284 311v7M285 311v7M286 310v10M287 309v10M288 307v13M289 311v7M290 309v10M291 310v8M292 311v7M293 310v8M294 309v11M295 309v9M296 309v9M297 309v10M298 309v11M299 309v10M300 311v9M301 311v8M302 309v9M303 309v11M304 309v11M305 310v8M306 310v9M307 309v9M308 311v7M309 309v10M310 310v11M311 311v7M312 310v9M313 309v9M314 311v7M315 312v6M316 311v8M317 310v8M318 309v11M319 313v6M320 311v9M321 311v7M322 311v8M323 309v9M324 309v9M325 311v9M326 310v9M327 309v11M328 311v8M329 311v6M330 311v7M331 311v9M332 309v10M333 309v9M334 311v7M335 309v10M336 309v9M337 312v5M338 313v6M339 309v11M340 309v9M341 310v10M342 309v11M343 311v7M344 310v8M345 311v7M346 311v7M347 309v9M348 310v10M349 311v8M350 307v10M351 309v9M352 310v9M353 309v10M354 311v9M355 309v9M356 309v11M357 310v10M358 311v8M359 311v9M360 310v10M361 311v7M362 309v10M363 309v10M364 309v11M365 310v8M366 311v7M367 309v11M368 311v8M369 310v11M370 310v8M371 311v7M372 311v7M373 309v9M374 311v8M375 309v9M376 309v11M377 309v11M378 311v7M379 311v8M380 309v11M381 309v11M382 311v9M383 309v9M384 311v8M385 311v9M386 309v10M387 311v8M388 310v13M389 307v11M390 311v7M391 309v10M392 311v9M393 311v10M394 311v7M395 311v8M396 313v4M397 309v16M398 311v7M399 309v9M400 309v10M401 313v6M402 311v7M403 311v8M404 311v9M405 309v13M406 311v9M407 310v9M408 311v9M409 311v9M410 309v9M411 311v9M412 309v9M413 305v14M414 309v10M415 311v7M416 309v9M417 311v7M418 311v8M419 311v7M420 309v9M421 310v8M422 308v10M423 311v11M424 311v7M425 311v8M426 313v5M427 311v7M428 311v7M429 311v7M430 309v11M431 311v8M432 309v11M433 309v10M434 311v10M435 311v10M436 311v7M437 310v8M438 309v9M439 311v8M440 309v10M441 309v10M442 310v10M443 308v12M444 309v10M445 311v7M446 309v9M447 311v7M448 311v8M449 311v13M450 305v14M451 311v7M452 311v9M453 309v11M454 311v9M455 310v10M456 307v11M457 311v7M458 309v11M459 310v8M460 311v9M461 311v8M462 311v9M463 310v8M464 311v8M465 311v7M466 311v7M467 309v11M468 311v7M469 309v10M470 311v8M471 311v9M472 309v9M473 311v8M474 310v9M475 311v9M476 305v14M477 310v10M478 311v7M479 311v7M480 309v10M481 311v7M482 311v8M483 311v9M484 311v8M485 306v13M486 309v9M487 310v8M488 310v9M489 311v7M490 311v9M491 310v12M492 311v7M493 309v9M494 309v9M495 311v8M496 309v9M497 311v9M498 305v13M499 311v7M500 311v7M501 311v7M502 311v7M503 311v8M504 311v8M505 311v10M506 309v11M507 311v6M508 311v7M509 309v9M510 308v11M511 311v9M512 310v13M513 305v13M514 309v11M515 311v7M516 311v11M517 309v9M518 309v9M519 311v8M520 309v10M521 311v9M522 309v9M523 311v7M524 309v11M525 311v6M526 309v10M527 310v8M528 309v9M529 311v9M530 311v9M531 311v8M532 311v7M533 310v10M534 311v8M535 311v8M536 308v10M537 311v9M538 308v12M539 309v10M540 311v8M541 309v8M542 311v9M543 309v9M544 311v9M545 311v7M546 311v8M547 309v11M548 311v9M549 311v7M550 309v9M551 311v9M552 311v9M553 311v9M554 312v5M555 309v11M556 313v6M557 311v9M558 311v7M559 311v7M560 309v10M561 311v8M562 311v7M563 311v9M564 309v14M565 308v10M566 305v17M567 311v9M568 309v9M569 311v10M570 309v9M571 311v11M572 311v8M573 311v12M574 309v11M575 311v7M576 311v7M577 309v9M578 311v8M579 309v9M580 309v9M581 311v10M582 311v9M583 307v11M584 311v7M585 311v11M586 309v10M587 311v8M588 311v7M589 311v9M590 309v11M591 311v7M592 311v9M593 311v7M594 309v9M595 311v9M596 307v13M597 310v8M598 311v7M599 309v11M600 311v8M601 310v8M602 309v11M603 311v8M604 309v9M605 311v7M606 309v9M607 311v8M608 309v10M609 308v11M610 311v6M611 309v10M612 310v8M613 309v9M614 310v9M615 311v7M616 309v9M617 306v12M618 309v9M619 311v9M620 311v7M621 311v13M622 310v9M623 311v9M624 309v11M625 309v9M626 309v12M627 311v8M628 311v7M629 311v8M630 311v8M631 311v7M632 311v8M633 309v9M634 309v10M635 311v8M636 311v8M637 311v7M638 309v9M639 308v12M640 309v11M641 311v7M642 313v5M643 310v10M644 310v7M645 311v7M646 311v8M647 309v14M648 311v9M649 311v7M650 310v9M651 311v9M652 309v10M653 308v12M654 310v15M655 311v8M656 310v10M657 310v8M658 311v7M659 311v8M660 311v9M661 310v11M662 309v15M663 311v8M664 309v11M665 309v9M666 311v7M667 311v7M668 309v10M669 309v10M670 311v7M671 312v5M672 309v10M673 311v8M674 311v7M675 311v7M676 309v13M677 311v7M678 311v9M679 311v9M680 311v7M681 310v8M682 309v11M683 311v9M684 309v9M685 309v9M686 309v9M687 311v7M688 311v7M689 308v14M690 309v11M691 306v13M692 307v16M693 311v9M694 309v9M695 311v9M696 311v8M697 311v7M698 311v9M699 309v9M700 310v8M701 309v9M702 311v9M703 309v9M704 310v8M705 311v7M706 308v10M707 311v7M708 309v9M709 311v7M710 311v7M711 309v9M712 309v12M713 311v13M714 306v13M715 310v8M716 309v9M717 309v9M718 311v9M719 309v9M720 311v7M721 309v12M722 307v11M723 309v11M724 310v8M725 309v10M726 311v9M727 311v7M728 311v9M729 309v10M730 309v9M731 311v9M732 311v8M733 311v8M734 310v8M735 310v8M736 310v8M737 311v7M738 311v7M739 311v9M740 311v8M741 310v9M742 311v9M743 311v9M744 310v9M745 309v9M746 309v11M747 311v7M748 311v7M749 309v9M750 310v8M751 311v8M752 311v8M753 311v7M754 311v7M755 310v8M756 309v11M757 311v8M758 306v12M759 309v11M760 309v10M761 311v7M762 309v10M763 311v7M764 310v9M765 309v9M766 311v8M767 311v10M768 309v10M769 311v9M770 311v7M771 309v11M772 312v6M773 310v10M774 311v11M775 309v9M776 310v10M777 311v7M778 310v8M779 311v10M780 311v9M781 310v10M782 309v9M783 311v7M784 309v9M785 311v7M786 311v8M787 310v10M788 311v12M789 309v9M790 306v12M791 313v6M792 311v8M793 307v11M794 311v7M795 311v9M796 309v10M797 311v8M798 311v9M799 311v9M800 311v9M801 311v7M802 307v11M803 309v10M804 311v7M805 309v9M806 309v10M807 311v7M808 311v7M809 311v7M810 311v7M811 311v8M812 311v8M813 309v10M814 311v8M815 311v8M816 311v7M817 309v12M818 307v13M819 307v11M820 310v9M821 310v9M822 311v6M823 310v8M824 311v7M825 311v9M826 309v9M827 309v9M828 309v9M829 311v13M830 310v8M831 311v7M832 311v7M833 311v8M834 309v10M835 310v8M836 309v10M837 309v9M838 311v9M839 311v8M840 309v11M841 309v9M842 311v7M843 311v8M844 309v10M845 311v8M846 309v9M847 309v11M848 311v9M849 311v7M850 311v8M851 310v10M852 307v13M853 309v10M854 309v9M855 311v11M856 311v11M857 311v7M858 311v7M859 313v4M860 311v7M861 309v11M862 309v11M863 311v8M864 311v7M865 309v9M866 311v9M867 309v12M868 311v9M869 311v8M870 311v8M871 311v8M872 309v9M873 311v7M874 311v10M875 311v7M876 307v11M877 305v15M878 309v9M879 310v8M880 309v9M881 311v9M882 311v7M883 311v9M884 309v10M885 310v8M886 312v5M887 309v9M888 311v7M889 311v7M890 309v13M891 311v7M892 310v9M893 311v7M894 309v11M895 311v7M896 311v7M897 309v9M898 311v9M899 311v8M900 309v9M901 311v9M902 309v14M903 309v10M904 311v7M905 309v9M906 306v13M907 311v9M908 309v14M909 309v10M910 311v7M911 309v11M912 311v7M913 309v10M914 309v15M915 311v7M916 311v7M917 309v10M918 311v7M919 310v11M920 310v9M921 305v13M922 311v7M923 311v8M924 310v9M925 309v10M926 311v7M927 311v7M928 309v10M929 309v10M930 309v12M931 309v11M932 310v8M933 310v8M934 311v7M935 311v9M936 311v8M937 309v11M938 309v9M939 311v7M940 311v7M941 311v12M942 309v9M943 311v8M944 309v9M945 310v10M946 305v13M947 311v9M948 311v8M949 311v7M950 311v7M951 311v7M952 309v10M953 309v11M954 311v7M955 311v7M956 306v14M957 309v9M958 311v8M959 311v13M960 311v8M961 311v8M962 309v10M963 309v9M964 311v7M965 309v11M966 309v10M967 306v12M968 309v9M969 311v7M970 313v4M971 311v7M972 309v11M973 311v9M974 311v10M975 309v9M976 309v11M977 309v11M978 313v5M979 311v9M980 311v7M981 307v11M982 311v7M983 311v9M984 311v9M985 309v9M986 309v10M987 311v11M988 309v9M989 311v9M990 309v10M991 309v9M992 309v9M993 311v8M994 310v10M995 311v7M996 309v14M997 309v9M998 310v10M999 311v9M1000 310v7M1001 307v13M1002 311v9M1003 311v9M1004 309v11M1005 309v11M1006 311v8M1007 306v14M1008 309v9M1009 311v9M1010 311v7M1011 311v7M1012 311v7M1013 309v9M1014 311v7M1015 313v8M1016 311v7M1017 309v9M1018 309v9M1019 311v7M1020 311v8" transform="translate(.5 0)"/>
<path fill="none" stroke="#ffff00" stroke-width="1.1" d="M21 385.01v5.95M22 382v5.01M23 382v3M24 380v6M25 382v4M26 380v5M27 379v6M28 382v4M29 381v4M30 380v5M31 382v3M32 379v6M33 380v6M34 381v5M35 381v5M36 379v6M37 382v4M38 382v3M39 380v5M40 380v5M41 380v6M42 380v6M43 380v6M44 382v3M45 379v6M46 381v4M47 380v6M48 381v4M49 381v5M50 381v4M51 380v5M52 380v5M53 382v6M54 380v6M55 380v5M56 381v4M57 381v4M58 379v7M59 382v3M60 380v5M61 380v5M62 380v6M63 380v6M64 379v7M65 380v5M66 380v5M67 381v5M68 382v3M69 382v3M70 380v6M71 380v6M72 381v5M73 381v4M74 380v6M75 382v3M76 380v5M77 380v6M78 380v5M79 380v5M80 381v5M81 380v5M82 380v5M83 379v6M84 380v5M85 381v5M86 379v6M87 380v6M88 382v3M89 380v6M90 381v5M91 379v7M92 380v5M93 379v6M94 381v4M95 380v6M96 380v5M97 380v5M98 380v6M99 379v6M100 380v5M101 382v4M102 380v6M103 380v5M104 380v6M105 380v5M106 381v5M107 379v10M108 381v4M109 381v4M110 380v6M111 380v6M112 380v5M113 381v5M114 381v5M115 379v6M116 380v5M117 380v6M118 382v3M119 381v4M120 381v5M121 381v5M122 380v5M123 381v4M124 380v6M125 380v5M126 380v5M127 380v7M128 380v6M129 382v4.08M130 384.08v5.46M131 388.55v7.3M132 394.85v8.89M133 402.74v10.23M134 411.98v11.33M135 422.31v12.17M136 433.48v12.77M137 445.25v13.12M138 457.36v13.22M139 469.58v13.07M140 481.64v12.67M141 493.31v12.02M142 504.34v11.13M143 514.46v9.99M144 523.45v8.59M145 531.05v6.96M146 537v5.07M147 540.07v3.43M148 539v6M149 540v5M150 539v5M151 540v5M152 540v4M153 537v7M154 537v7M155 537v8M156 540v5M157 539v5M158 537v7M159 537v7M160 537v8M161 538v7M162 537v9M163 537v7M164 537v9M165 540v5M166 537v8M167 540v4M168 540v5M169 539v6M170 537v8M171 538v7M172 538v7M173 540v4M174 540v5M175 540v5M176 537v7M177 540v4M178 537v8M179 538v7M180 540v6M181 537v8M182 538v6M183 539v5M184 540v4M185 540v5M186 540v5M187 540v4M188 540v5M189 537v7M190 537v8M191 537v8M192 537v7M193 538v7M194 540v6M195 537v8M196 538v8M197 539v7M198 540v4M199 539v5M200 537v8M201 540v4M202 538v6M203 538v6M204 537v8M205 538v6M206 540v4M207 540v6M208 537v7M209 537v7M210 540v6M211 540v4M212 540v4M213 538v6M214 538v6M215 537v8M216 540v5M217 540v4M218 540v5M219 540v5M220 540v6M221 540v4M222 539v6M223 540v5M224 537v9M225 540v4M226 537v7M227 539v5M228 540v5M229 538v6M230 537v7M231 537v7M232 538v6M233 537v8M234 538v6M235 537v7M236 540v4M237 540v5M238 537v7M239 540v5M240 540v5M241 540v4M242 537v8M243 537v9M244 537v9M245 538v7M246 540v4M247 537v7M248 540v4M249 540v6M250 538v7M251 540v6M252 537v9M253 540v4M254 539.75v3.75M255 536.49v5.27M256 530.36v7.13M257 522.61v8.75M258 513.5v10.11M259 503.27v11.23M260 492.17v12.1M261 480.45v12.72M262 468.36v13.09M263 456.14v13.22M264 444.05v13.09M265 432.33v12.72M266 421.23v12.1M267 411v11.23M268 401.89v10.11M269 394.14v8.75M270 388.01v7.13M271 383.75v5.27M272 382v3.75M273 380v5M274 381v5M275 379v6M276 380v5M277 381v4M278 381v4M279 381v4M280 381v5M281 381v5M282 380v8M283 380v5M284 380v6M285 382v4M286 381v5M287 381v4M288 380v6M289 380v6M290 380v6M291 381v4M292 381v5M293 379v6M294 381v5M295 382v3M296 380v5M297 379v7M298 381v4M299 380v5M300 382v4M301 380v6M302 380v5M303 379v7M304 380v5M305 381v5M306 380v9M307 381v4M308 379v7M309 381v4M310 379v10M311 379v10M312 381v5M313 382v4M314 379v6M315 382v4M316 379v6M317 379v6M318 381v4M319 382v3M320 381v4M321 381v4M322 381v5M323 379v7M324 382v3M325 380v5M326 379v7M327 380v5M328 379v6M329 380v6M330 380v9M331 380v5M332 380v6M333 381v5M334 380v5M335 380v5M336 380v5M337 380v5M338 381v4M339 380v5M340 380v6M341 380v5M342 379v7M343 381v4M344 379v7M345 381v5M346 382v3M347 380v5M348 380v5M349 381v4M350 381v5M351 380v5M352 379v7M353 381v4M354 380v6M355 381v4M356 380v6M357 381v5M358 380v5M359 379v7M360 379v6M361 379v6M362 379v7M363 380v5M364 380v6M365 382v3M366 380v5M367 382v3M368 381v5M369 380v5M370 380v9M371 379v7M372 379v6M373 380v8M374 381v5M375 380v6M376 382v3M377 381v5M378 380v5M379 382v5.42M380 385.42v6.14M381 390.56v7.89M382 397.44v9.39M383 405.84v10.65M384 415.48v11.65M385 426.13v12.41M386 437.54v12.92M387 449.46v13.18M388 461.64v13.19M389 473.83v12.96M390 485.79v12.47M391 497.26v11.74M392 508v10.76M393 517.75v9.53M394 526.28v8.05M395 533.33v6.32M396 537.65v5.85M397 538v8M398 539v6M399 540v5M400 537v8M401 537v7M402 539v5M403 537v9M404 538v7M405 540v4M406 537v8M407 537v9M408 540v6M409 538v7M410 540v4M411 537v7M412 539v5M413 540v4M414 540v4M415 540v5M416 540v4M417 540v5M418 540v5M419 540v4M420 537v8M421 539v6M422 540v4M423 539v5M424 540v5M425 539v6M426 538v6M427 537v7M428 540v5M429 540v6M430 535v11M431 539v7M432 540v4M433 537v7M434 537v9M435 540v5M436 538v7M437 537v8M438 539v7M439 537v7M440 540v5M441 540v6M442 538v7M443 540v6M444 540v4M445 540v4M446 540v5M447 537v8M448 537v7M449 538v7M450 540v4M451 537v7M452 537v9M453 538v7M454 539v7M455 537v7M456 537v7M457 537v8M458 539v5M459 540v5M460 537v7M461 540v5M462 538v7M463 538v7M464 540v4M465 537v7M466 537v8M467 540v5M468 540v4M469 540v6M470 538v6M471 540v6M472 538v7M473 539v5M474 538v7M475 540v5M476 540v4M477 540v5M478 540v5M479 538v6M480 538v7M481 540v5M482 540v6M483 540v4M484 540v5M485 540v5M486 540v5M487 537v7M488 539v6M489 540v5M490 537v8M491 539v7M492 540v4M493 537v8M494 540v6M495 538v7M496 537v7M497 540v5M498 537v9M499 537v7M500 537v8M501 538v8M502 535v9M503 540v5M504 538.49v5.01M505 534.54v5.95M506 527.82v7.72M507 519.56v9.25M508 510.03v10.53M509 499.47v11.56M510 488.13v12.34M511 476.25v12.88M512 464.08v13.16M513 451.88v13.2M514 439.89v12.99M515 428.36v12.53M516 417.54v11.82M517 407.67v10.87M518 399.01v9.66M519 391.8v8.21M520 386.3v6.51M521 383v4.3M522 380v5M523 382v3M524 381v4M525 380v5M526 381v7M527 380v5M528 381v4M529 382v3M530 380v5M531 380v6M532 380v6M533 379v7M534 379v7M535 380v6M536 379v7M537 381v4M538 381v4M539 380v5M540 382v3M541 381v4M542 379v6M543 381v4M544 380v6M545 382v4M546 382v3M547 380v6M548 380v6M549 380v6M550 379v7M551 379v6M552 380v5M553 382v4M554 381v4M555 379v6M556 380v6M557 381v5M558 380v6M559 381v5M560 380v5M561 382v3M562 381v4M563 381v5M564 380v6M565 381v5M566 380v5M567 381v4M568 380v5M569 381v4M570 382v4M571 380v5M572 380v5M573 381v4M574 380v5M575 380v6M576 379v7M577 381v5M578 380v6M579 380v5M580 380v5M581 380v5M582 380v5M583 379v6M584 379v6M585 381v4M586 381v4M587 380v5M588 381v4M589 380v5M590 380v5M591 380v6M592 382v4M593 382v3M594 381v5M595 380v5M596 379v7M597 381v8M598 380v5M599 380v5M600 380v5M601 381v5M602 381v5M603 380v5M604 379v6M605 379v6M606 380v8M607 379v6M608 380v9M609 380v5M610 379v6M611 379v6M612 380v6M613 380v5M614 381v4M615 380v5M616 380v6M617 381v4M618 380v6M619 381v4M620 381v4M621 379v6M622 380v6M623 379v6M624 379v7M625 382v3M626 380v6M627 380v5M628 380v5.14M629 383.14v4.86M630 387v6.78M631 392.78v8.44M632 400.22v9.86M633 409.08v11.03M634 419.11v11.94M635 430.05v12.62M636 441.67v13.04M637 453.71v13.21M638 465.92v13.14M639 478.05v12.81M640 489.87v12.24M641 501.11v11.42M642 511.53v10.35M643 520.89v9.04M644 528.93v7.47M645 535.4v5.66M646 539.06v4.44M647 537v8M648 538v8M649 540v5M650 539v7M651 537v8M652 540v4M653 540v6M654 537v8M655 540v5M656 539v7M657 537v7M658 539v6M659 540v5M660 540v4M661 540v4M662 540v5M663 538v8M664 538v7M665 539v5M666 537v8M667 540v4M668 540v6M669 540v5M670 537v7M671 539v6M672 539v6M673 537v7M674 538v6M675 537v7M676 537v9M677 540v4M678 540v6M679 537v8M680 540v5M681 540v6M682 540v6M683 540v5M684 537v8M685 540v5M686 540v5M687 537v8M688 537v7M689 537v7M690 539v7M691 540v4M692 537v8M693 537v8M694 538v8M695 540v5M696 539v6M697 539v6M698 539v6M699 540v5M700 540v4M701 537v8M702 540v4M703 540v5M704 540v5M705 540v6M706 537v8M707 540v6M708 537v7M709 537v7M710 537v7M711 538v6M712 540v5M713 538v7M714 538v6M715 540v6M716 538v6M717 537v9M718 540v4M719 538v8M720 540v6M721 537v8M722 540v4M723 537v8M724 537v7M725 540v5M726 537v8M727 540v6M728 539v7M729 538v7M730 540v4M731 537v7M732 539v7M733 538v7M734 537v9M735 540v4M736 540v4M737 537v7M738 540v4M739 540v5M740 537v8M741 540v5M742 539v6M743 537v8M744 539v5M745 540v5M746 537v8M747 540v5M748 539v6M749 540v6M750 540v6M751 538v7M752 540v4M753 538v7M754 537.97v4.53M755 532.38v6.6M756 525.09v8.29M757 516.36v9.73M758 506.44v10.92M759 495.58v11.86M760 484.02v12.56M761 472.01v13.01M762 459.8v13.21M763 447.65v13.16M764 435.79v12.86M765 424.48v12.31M766 413.96v11.52M767 404.49v10.47M768 396.31v9.18M769 389.67v7.64M770 384.82v5.85M771 382v4.82M772 381v4M773 380v7M774 381v5M775 381v5M776 380v5M777 381v5M778 381v4M779 380v5M780 382v7M781 380v6M782 379v10M783 382v3M784 380v6M785 381v5M786 379v6M787 381v4M788 380v5M789 380v5M790 380v5M791 379v6M792 380v5M793 380v5M794 380v5M795 381v5M796 381v4M797 379v7M798 381v4M799 381v4M800 381v5M801 381v5M802 380v5M803 381v5M804 379v7M805 379v6M806 381v4M807 379v10M808 379v6M809 380v5M810 380v5M811 381v4M812 380v6M813 379v6M814 380v5M815 380v10M816 380v5M817 381v5M818 382v4M819 380v5M820 380v6M821 381v4M822 381v6M823 380v5M824 382v4M825 380v6M826 380v5M827 380v5M828 380v5M829 379v6M830 379v6M831 381v7M832 380v5M833 379v6M834 381v4M835 380v6M836 381v9M837 380v5M838 381v4M839 381v5M840 382v3M841 382v4M842 379v6M843 380v6M844 380v5M845 379v7M846 381v4M847 381v8M848 379v6M849 380v6M850 380v5M851 380v6M852 382v3M853 381v5M854 381v4M855 381v4M856 381v4M857 380v5M858 381v4M859 380v6M860 380v6M861 382v4M862 380v5M863 380v6M864 380v5M865 381v5M866 382v3M867 382v7M868 382v3M869 380v5M870 381v4M871 382v3M872 381v4M873 381v5M874 381v5M875 382v3M876 381v4M877 379v7M878 382v4.26M879 384.26v5.56M880 388.82v7.39M881 395.21v8.97M882 403.18v10.3M883 412.47v11.38M884 422.85v12.21M885 434.05v12.79M886 445.85v13.13M887 457.97v13.21M888 470.19v13.05M889 482.24v12.64M890 493.88v11.98M891 504.87v11.08M892 514.94v9.92M893 523.87v8.52M894 531.38v6.87M895 537.25v4.97M896 540.22v3.28M897 538v7M898 537v9M899 540v5M900 540v5M901 540v5M902 540v5M903 538v7M904 537v9M905 540v6M906 539v6M907 537v8M908 539v5M909 540v6M910 537v8M911 537v9M912 540v5M913 540v5M914 538v8M915 537v8M916 540v5M917 538v7M918 540v6M919 539v6M920 540v5M921 537v9M922 540v4M923 539v5M924 539v5M925 540v6M926 538v6M927 535v10M928 538v8M929 538v6M930 538v7M931 537v7M932 538v6M933 537v9M934 540v5M935 537v7M936 537v9M937 540v6M938 537v7M939 537v8M940 540v4M941 540v5M942 537v8M943 538v6M944 540v5M945 540v5M946 538v6M947 540v4M948 537v7M949 539v6M950 540v5M951 539v5M952 538v7M953 540v5M954 540v5M955 540v5M956 540v4M957 540v6M958 535v11M959 537v7M960 538v7M961 540v6M962 538v7M963 540v4M964 540v4M965 540v4M966 539v5M967 540v5M968 539v5M969 539v7M970 535v9M971 537v8M972 540v4M973 540v6M974 538v8M975 540v5M976 537v8M977 538v8M978 540v4M979 540v6M980 540v5M981 539v5M982 537v7M983 539v6M984 537v8M985 540v4M986 540v5M987 537v8M988 537v7M989 540v5M990 537v9M991 540v4M992 540v5M993 537v9M994 537v9M995 537v7M996 538v6M997 540v5M998 537v9M999 540v4M1000 540v4M1001 539v6M1002 540v5M1003 539.59v3.91M1004 536.22v5.37M1005 530v7.22M1006 522.19v8.82M1007 513.01v10.17M1008 502.73v11.28M1009 491.6v12.14M1010 479.85v12.74M1011 467.75v13.1M1012 455.53v13.22M1013 443.45v13.08M1014 431.76v12.69M1015 420.7v12.06M1016 410.52v11.18M1017 401.47v10.05M1018 393.8v8.67M1019 387.75v7.04M1020 383.59v5.17M21 377v16M22 378v8" transform="translate(.5 0)"/>
<path stroke="#ffff00" stroke-width="1" fill="none" stroke-dasharray="6 2 3 2" d="M21 376.5H1021"/>
<path stroke="#ffff00" stroke-width="1" fill="none" stroke-dasharray="4 4" stroke-dashoffset="6" d="M21 384.5H1021M21 542.5H1021"/>
<path stroke="#ffff00" stroke-width="1" fill="none" d="M375.5 17V668M646.5 17V668"/>
<rect x="368.5" y="377.5" width="14" height="14" fill="none" stroke="#ffff00"/>
<circle cx="646.5" cy="542.5" r="7" fill="none" stroke="#ffff00" shape-rendering="auto"/>
<path fill="#ffff00" d="M1010 463.5l6-6v12zM1016 463h5v1h-5z" shape-rendering="auto"/>
</svg>
<div id="ov">
<!-- top bar -->
<div class="tek">Tek</div>
<div class="t w" style="left:34px;top:-1px;letter-spacing:0;">Parar</div>
<div class="ovw"></div>
<svg class="abs" style="left:0;top:0" width="1024" height="44" viewBox="0 0 1024 44">
  <path d="M281 1h3v2h-1v10h1v2h-3z" fill="#a29696" shape-rendering="crispEdges"/>
  <path d="M283 7.500H761" stroke="#ffff00" stroke-width="1" shape-rendering="crispEdges"/>
  <path d="M763 1h-3v2h1v10h-1v2h3z" fill="#a29696" shape-rendering="crispEdges"/>
  <!-- overview trigger marker -->
  <path d="M514.500 1h8l-4 4z" fill="#ffa000"/>
  <rect x="514" y="5" width="8" height="11" rx="1.500" fill="#ffa000"/>
  <text x="518" y="15" font-family="DejaVu Sans, sans-serif" font-weight="bold" font-size="12.500" text-anchor="middle" fill="#000" transform="translate(518 0) scale(.74 1) translate(-518 0)">T</text>
  <!-- main trigger marker -->
  <path d="M509 17h11.500l-5.750 6z" fill="#ffa000"/>
  <path d="M508 26q0-2 2-2h8.500q2 0 2 2v9.500l-6.250 3.500l-6.250-3.500z" fill="#ffa000"/>
  <text x="514.300" y="36.300" font-family="DejaVu Sans, sans-serif" font-size="15.500" text-anchor="middle" fill="#000" stroke="#000" stroke-width=".8">T</text>
  <!-- cursor badges -->
  <circle cx="385" cy="30" r="8.200" fill="#ff4400"/>
  <circle cx="636" cy="30" r="8.200" fill="#ff4400"/>
</svg>
<div class="bdg ba" style="left:377px;top:22px;">a</div>
<div class="bdg bb" style="left:628px;top:22.500px;">b</div>

<!-- cursor readout -->
<div class="box" style="left:719px;top:40px;width:300px;height:58px;border-radius:7px;"></div>
<svg class="abs" style="left:719px;top:40px" width="60" height="60" viewBox="719 40 60 60">
  <rect x="738.500" y="44.500" width="14" height="14" fill="none" stroke="#ffff00" shape-rendering="crispEdges"/>
  <circle cx="745.500" cy="71.500" r="7" fill="none" stroke="#ffff00" stroke-width="1.400"/>
  <circle cx="766" cy="52" r="8.200" fill="#ff4400"/>
  <circle cx="766" cy="71.200" r="8.200" fill="#ff4400"/>
</svg>
<div class="bdg ba" style="left:758px;top:44px;">a</div>
<div class="bdg bb" style="left:758px;top:64px;">b</div>
<div class="t y cr" style="left:782px;top:43px;width:100px;">−278.0ns</div>
<div class="t y cr" style="left:782px;top:62px;width:100px;">264.0ns</div>
<div class="t y cr" style="left:782px;top:81px;width:100px;"><span class="dl">∆</span>542.0ns</div>
<div class="t y cr" style="left:913px;top:43px;width:100px;">23.60 V</div>
<div class="t y cr" style="left:913px;top:62px;width:100px;">−800.0mV</div>
<div class="t y cr" style="left:913px;top:81px;width:100px;"><span class="dl">∆</span>24.40 V</div>

<!-- channel markers -->
<svg class="abs" style="left:0;top:330px" width="22" height="220" viewBox="0 330 22 220">
  <path d="M2 337.500h11l6.500 8l-6.500 8h-11q-1.500 0-1.500-1.500v-13q0-1.500 1.500-1.500z" fill="#000" stroke="#08c008" stroke-width="1.400"/>
  <path d="M2 415.500h11l6.500 8l-6.500 8h-11q-1.500 0-1.500-1.500v-13q0-1.500 1.500-1.500z" fill="#000" stroke="#c010c0" stroke-width="1.400"/>
  <path d="M2 461.500h11l6.500 8l-6.500 8h-11q-1.500 0-1.500-1.500v-13q0-1.500 1.500-1.500z" fill="#000" stroke="#00d8d8" stroke-width="1.400"/>
  <path d="M1.500 529h12l6.500 8.500l-6.500 8.500h-12q-1.500 0-1.500-1.500v-14q0-1.500 1.500-1.500z" fill="#ffff00"/>
  <path d="M1 529.500h12.500" stroke="#ffffd8" stroke-width="1" fill="none"/>
  <path d="M1 545.500h12.500l6.200-8" stroke="#181808" stroke-width="1.200" fill="none"/>
</svg>
<div class="t mk" style="left:2px;top:337px;color:#10c010;">4</div>
<div class="t mk" style="left:2px;top:415px;color:#c818c8;">3</div>
<div class="t mk" style="left:2px;top:461px;color:#00e0e0;">2</div>
<div class="t mk one" style="left:1px;top:530px;color:#000;">1</div>

<!-- channel bar -->
<div class="box" style="left:20px;top:598px;width:553px;height:19px;border-radius:6px;"></div>
<div class="pill one" style="left:26px;top:601px;background:#ffff00;">1</div>
<div class="t y" style="left:68px;top:600px;">10.0 V</div>
<div class="t y" style="left:143.500px;top:599px;font-size:9px;text-shadow:.3px 0 0 currentColor;letter-spacing:0;transform:scaleX(.72);transform-origin:0 0;">B<span style="position:relative;top:4px;left:-.5px;">W</span></div>
<div class="pill" style="left:165px;top:601px;background:#00e0e0;">2</div>
<div class="t c" style="left:207px;top:600px;">5.00 V</div>
<div class="pill" style="left:304px;top:601px;background:#b000b0;">3</div>
<div class="t m" style="left:346px;top:600px;">5.00 V</div>
<div class="pill" style="left:443px;top:601px;background:#00a000;">4</div>
<div class="t g" style="left:485px;top:600px;">5.00 V</div>

<!-- measurement box -->
<div class="box" style="left:20px;top:620px;width:553px;height:91px;border-radius:6px;"></div>
<div class="t w" style="left:158px;top:622px;">Valor</div>
<div class="t w" style="left:246px;top:622px;">Média</div>
<div class="t w" style="left:329px;top:622px;letter-spacing:1.1px;">Mín.</div>
<div class="t w" style="left:411px;top:622px;">Máx.</div>
<div class="t w" style="left:493px;top:622px;">Desv<span style="letter-spacing:2px;margin-left:1px">.</span>Pad</div>

<div class="pill" style="left:26px;top:641px;background:#b000b0;">3</div>
<div class="t m" style="left:56px;top:640px;">Média</div>
<div class="t m" style="left:158px;top:640px;">23.99 V</div>
<div class="t m" style="left:246px;top:640px;">23.86</div>
<div class="t m" style="left:329px;top:640px;">23.73</div>
<div class="t m" style="left:411px;top:640px;">23.99</div>
<div class="t m" style="left:493px;top:640px;">53.43m</div>

<div class="pill" style="left:26px;top:659px;background:#00a000;">4</div>
<div class="t g" style="left:56px;top:658px;">Média</div>
<div class="t g" style="left:158px;top:658px;">11.94 V</div>
<div class="t g" style="left:246px;top:658px;">10.24</div>
<div class="t g" style="left:326.500px;top:658px;">−217.2m</div>
<div class="t g" style="left:411px;top:658px;">12.00</div>
<div class="t g" style="left:493px;top:658px;">2.809</div>

<div class="pill" style="left:26px;top:677px;background:#00e0e0;">2</div>
<div class="t c" style="left:56px;top:676px;">Média</div>
<div class="t c" style="left:158px;top:676px;">11.99 V</div>
<div class="t c" style="left:246px;top:676px;">11.17</div>
<div class="t c" style="left:329px;top:676px;">7.614</div>
<div class="t c" style="left:411px;top:676px;">12.23</div>
<div class="t c" style="left:493px;top:676px;">909.4m</div>

<div class="pill one" style="left:26px;top:695px;background:#ffff00;">1</div>
<div class="t y" style="left:56px;top:694px;">Máx.</div>
<div class="t y" style="left:158px;top:694px;">24.80 V</div>
<div class="t y" style="left:246px;top:694px;">24.61</div>
<div class="t y" style="left:329px;top:694px;">24.40</div>
<div class="t y" style="left:411px;top:694px;">25.20</div>
<div class="t y" style="left:493px;top:694px;">207.4m</div>

<!-- status boxes -->
<div class="box" style="left:582px;top:670px;width:147px;height:36px;border-radius:7px;"></div>
<div class="t w" style="left:588px;top:672px;">200ns</div>
<div class="tbox" style="left:587px;top:691px;"></div>
<div class="t k ctr" style="left:587px;top:689px;width:12px;letter-spacing:0;transform:scaleX(1.15);">T</div>
<div class="t" style="left:604px;top:689px;color:#ffa000;">49.30 %</div>

<div class="box" style="left:737px;top:670px;width:105px;height:36px;border-radius:7px;"></div>
<div class="t w" style="left:743px;top:672px;letter-spacing:.9px;">5.00GA/s</div>
<div class="t w" style="left:744px;top:689px;letter-spacing:.5px;">10k pts.</div>

<div class="box" style="left:851px;top:670px;width:169px;height:36px;border-radius:7px;"></div>
<div class="pill one" style="left:882px;top:673px;background:#ffff00;">1</div>
<svg class="abs" style="left:918px;top:673px" width="16" height="14" viewBox="0 0 16 14"><path d="M2 12h4l3.500-9h4.500" stroke="#fff" stroke-width="1.800" fill="none"/></svg>
<div class="t w" style="left:966px;top:672px;">11.4 V</div>

<div class="box" style="left:909px;top:729px;width:111px;height:35px;border-radius:7px;"></div>
<div class="t w" style="left:915px;top:732px;">13 fev.&nbsp; 2025</div>
<div class="t w" style="left:915px;top:748px;letter-spacing:.5px;">07:25:33</div>

<!-- bottom menu -->
<div class="ytab"></div>
<div class="t k one" style="left:4px;top:735px;">1</div>

<div class="btn flat" style="left:20px;top:714px;width:114px;height:54px;"></div>
<div class="t k" style="left:41px;top:719px;letter-spacing:.3px;">Acoplam.</div>
<div class="sel" style="left:34px;top:742px;width:28px;height:26px;"></div>
<div class="t k" style="left:38px;top:746px;">CC</div>
<div class="t k" style="left:94px;top:746px;">CA</div>

<div class="t w ctr" style="left:138px;top:713px;width:115px;">Terminação</div>
<div class="t w ctr" style="left:138px;top:730px;width:115px;letter-spacing:.7px;">defin. por</div>
<div class="t w ctr" style="left:138px;top:747px;width:115px;letter-spacing:.6px;">TPP1000</div>

<div class="btn flat" style="left:256px;top:714px;width:114px;height:54px;"></div>
<div class="t k" style="left:279px;top:719px;letter-spacing:.5px;">Inversão</div>
<div class="t k" style="left:259px;top:746px;">Ligado</div>
<div class="sel" style="left:317px;top:742px;width:48px;height:26px;"></div>
<div class="t k" style="left:321px;top:746px;letter-spacing:.4px;">Desl.</div>

<div class="btn" style="left:374px;top:714px;width:114px;height:54px;"></div>
<div class="t k" style="left:376px;top:724px;letter-spacing:-.2px;">Larg. de Banda</div>
<div class="sel" style="left:403px;top:742px;width:56px;height:16px;border-radius:0;"></div>
<div class="t k" style="left:404px;top:741px;letter-spacing:.5px;">20MHz</div>

<div class="btn" style="left:492px;top:714px;width:114px;height:54px;"></div>
<div class="t k" style="left:507px;top:732px;letter-spacing:.6px;">Rótulo</div>
<div class="pill one" style="left:566px;top:733px;background:#ffff00;">1</div>

<div class="btn" style="left:728px;top:714px;width:114px;height:54px;"></div>
<svg class="abs" style="left:770px;top:726px" width="30" height="14" viewBox="770 726 30 14"><path d="M785 727l11.500 11h-23z" fill="#dfe4f6"/><path d="M776 736l-2.500 2h23l-2.500-2z" fill="#8a8c98"/></svg>
<div class="t k" style="left:767px;top:739px;">Mais</div>

</div>
</body></html>
